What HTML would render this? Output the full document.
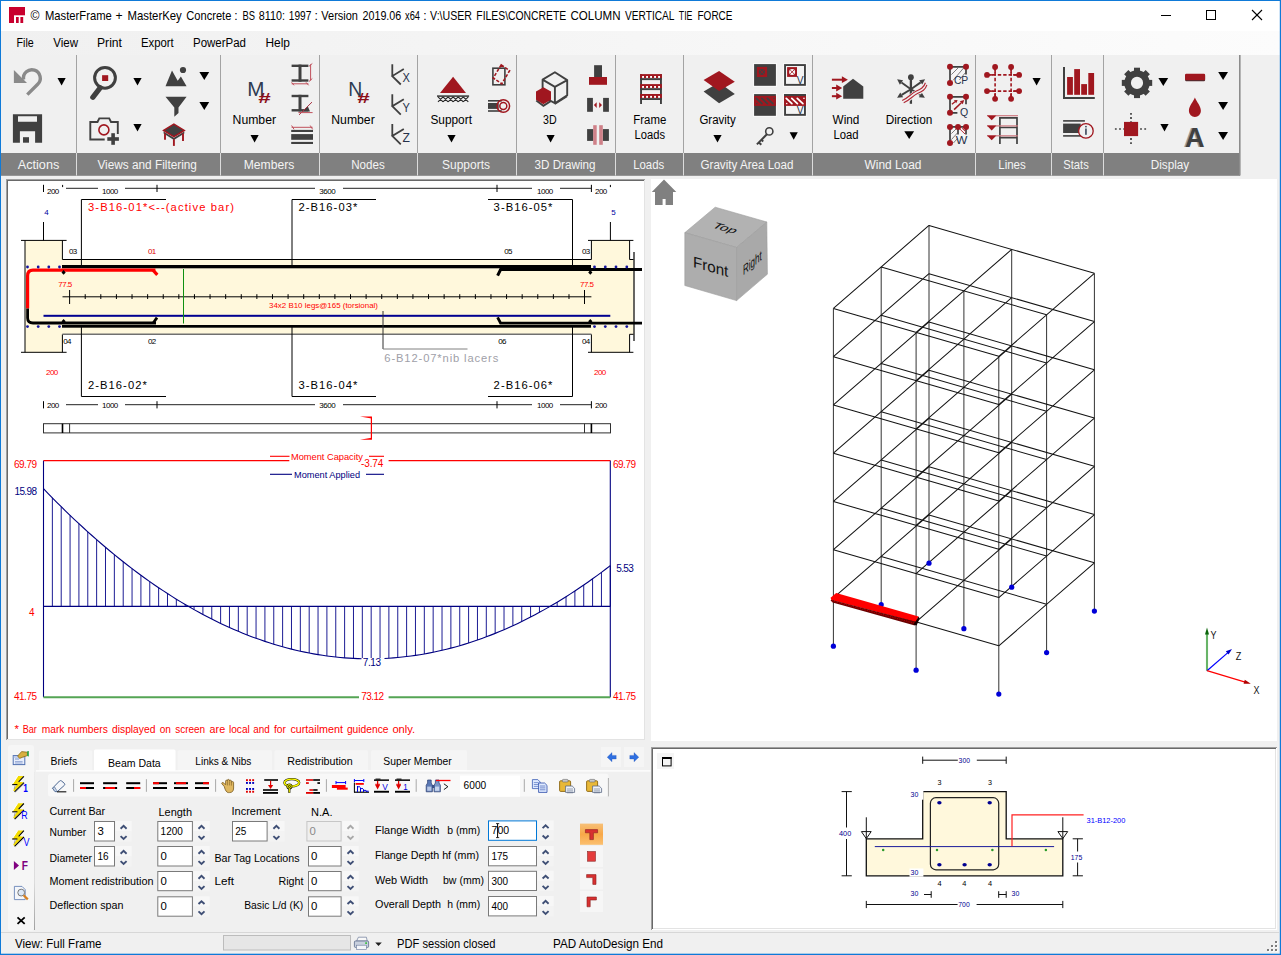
<!DOCTYPE html>
<html><head><meta charset="utf-8"><title>MasterFrame</title>
<style>
html,body{margin:0;padding:0;background:#f0f0f0;overflow:hidden;}
body{width:1281px;height:955px;font-family:"Liberation Sans",sans-serif;}
svg{display:block;font-family:"Liberation Sans",sans-serif;}
</style></head><body>
<svg width="1281" height="955" viewBox="0 0 1281 955">
<rect x="0" y="0" width="1281" height="955" fill="#f0f0f0" />
<rect x="0" y="0" width="1281" height="31" fill="#ffffff" />
<defs><linearGradient id="mg" x1="0" y1="0" x2="1" y2="0"><stop offset="0" stop-color="#f0f0f0"/><stop offset="1" stop-color="#fcfcfc"/></linearGradient></defs>
<rect x="0" y="31" width="1281" height="24" fill="url(#mg)" />
<rect x="9" y="7" width="16" height="16" fill="#c8002e" />
<rect x="14" y="15.3" width="11" height="7.7" fill="#ffffff" />
<rect x="16" y="17" width="2.7" height="6" fill="#c8002e" />
<rect x="20.4" y="17" width="2.8" height="6" fill="#c8002e" />
<text x="30.5" y="19.8" font-size="12.2" fill="#000" text-anchor="start" >©</text>
<text x="45" y="19.8" font-size="12.2" fill="#000" text-anchor="start" textLength="66.8" lengthAdjust="spacingAndGlyphs" >MasterFrame</text>
<text x="115.6" y="19.8" font-size="12.2" fill="#000" text-anchor="start" >+</text>
<text x="127.5" y="19.8" font-size="12.2" fill="#000" text-anchor="start" textLength="54.3" lengthAdjust="spacingAndGlyphs" >MasterKey</text>
<text x="186.3" y="19.8" font-size="12.2" fill="#000" text-anchor="start" textLength="45.0" lengthAdjust="spacingAndGlyphs" >Concrete</text>
<text x="234.2" y="19.8" font-size="12.2" fill="#000" text-anchor="start" >:</text>
<text x="242.5" y="19.8" font-size="12.2" fill="#000" text-anchor="start" textLength="12.5" lengthAdjust="spacingAndGlyphs" >BS</text>
<text x="258.8" y="19.8" font-size="12.2" fill="#000" text-anchor="start" textLength="26.2" lengthAdjust="spacingAndGlyphs" >8110:</text>
<text x="288.8" y="19.8" font-size="12.2" fill="#000" text-anchor="start" textLength="22.5" lengthAdjust="spacingAndGlyphs" >1997</text>
<text x="314.6" y="19.8" font-size="12.2" fill="#000" text-anchor="start" >:</text>
<text x="321.3" y="19.8" font-size="12.2" fill="#000" text-anchor="start" textLength="36.7" lengthAdjust="spacingAndGlyphs" >Version</text>
<text x="362.5" y="19.8" font-size="12.2" fill="#000" text-anchor="start" textLength="38.8" lengthAdjust="spacingAndGlyphs" >2019.06</text>
<text x="405" y="19.8" font-size="12.2" fill="#000" text-anchor="start" textLength="15" lengthAdjust="spacingAndGlyphs" >x64</text>
<text x="423.2" y="19.8" font-size="12.2" fill="#000" text-anchor="start" >:</text>
<text x="430" y="19.8" font-size="12.2" fill="#000" text-anchor="start" textLength="42" lengthAdjust="spacingAndGlyphs" >V:\USER</text>
<text x="476.3" y="19.8" font-size="12.2" fill="#000" text-anchor="start" textLength="90.0" lengthAdjust="spacingAndGlyphs" >FILES\CONCRETE</text>
<text x="570.5" y="19.8" font-size="12.2" fill="#000" text-anchor="start" textLength="50.0" lengthAdjust="spacingAndGlyphs" >COLUMN</text>
<text x="625" y="19.8" font-size="12.2" fill="#000" text-anchor="start" textLength="49.5" lengthAdjust="spacingAndGlyphs" >VERTICAL</text>
<text x="678.8" y="19.8" font-size="12.2" fill="#000" text-anchor="start" textLength="13.7" lengthAdjust="spacingAndGlyphs" >TIE</text>
<text x="697.5" y="19.8" font-size="12.2" fill="#000" text-anchor="start" textLength="35.0" lengthAdjust="spacingAndGlyphs" >FORCE</text>
<line x1="1161" y1="15.5" x2="1171" y2="15.5" stroke="#000" stroke-width="1" />
<rect x="1206.5" y="10.5" width="9" height="9" fill="none" stroke="#000" stroke-width="1" />
<line x1="1252" y1="10" x2="1262" y2="20" stroke="#000" stroke-width="1.1" />
<line x1="1262" y1="10" x2="1252" y2="20" stroke="#000" stroke-width="1.1" />
<text x="16.5" y="46.8" font-size="12.3" fill="#000" text-anchor="start" textLength="17.2" lengthAdjust="spacingAndGlyphs" >File</text>
<text x="53.2" y="46.8" font-size="12.3" fill="#000" text-anchor="start" textLength="24.8" lengthAdjust="spacingAndGlyphs" >View</text>
<text x="97" y="46.8" font-size="12.3" fill="#000" text-anchor="start" textLength="25" lengthAdjust="spacingAndGlyphs" >Print</text>
<text x="141" y="46.8" font-size="12.3" fill="#000" text-anchor="start" textLength="32.7" lengthAdjust="spacingAndGlyphs" >Export</text>
<text x="193" y="46.8" font-size="12.3" fill="#000" text-anchor="start" textLength="53" lengthAdjust="spacingAndGlyphs" >PowerPad</text>
<text x="265.5" y="46.8" font-size="12.3" fill="#000" text-anchor="start" textLength="24.5" lengthAdjust="spacingAndGlyphs" >Help</text>
<rect x="6" y="179" width="639" height="561" fill="#ffffff" />
<line x1="6" y1="179.5" x2="645" y2="179.5" stroke="#a0a0a0" stroke-width="1" />
<line x1="6.5" y1="179" x2="6.5" y2="740" stroke="#a0a0a0" stroke-width="1" />
<line x1="7" y1="180.5" x2="644" y2="180.5" stroke="#696969" stroke-width="1" />
<line x1="7.5" y1="180" x2="7.5" y2="739" stroke="#696969" stroke-width="1" />
<line x1="644.5" y1="180" x2="644.5" y2="740" stroke="#e3e3e3" stroke-width="1" />
<line x1="7" y1="739.5" x2="645" y2="739.5" stroke="#e3e3e3" stroke-width="1" />
<rect x="651" y="179" width="626" height="562" fill="#ffffff" />
<rect x="651" y="747" width="626" height="183" fill="#ffffff" />
<line x1="651" y1="747.5" x2="1277" y2="747.5" stroke="#a0a0a0" stroke-width="1" />
<line x1="651.5" y1="747" x2="651.5" y2="930" stroke="#a0a0a0" stroke-width="1" />
<line x1="652" y1="748.5" x2="1276" y2="748.5" stroke="#696969" stroke-width="1" />
<line x1="652.5" y1="748" x2="652.5" y2="929" stroke="#696969" stroke-width="1" />
<line x1="1275.5" y1="749" x2="1275.5" y2="929" stroke="#e3e3e3" stroke-width="1" />
<line x1="653" y1="928.5" x2="1276" y2="928.5" stroke="#e3e3e3" stroke-width="1" />
<line x1="0" y1="932.5" x2="1279" y2="932.5" stroke="#d7d7d7" stroke-width="1" />
<text x="15" y="947.7" font-size="12.2" fill="#000" text-anchor="start" textLength="86.5" lengthAdjust="spacingAndGlyphs" >View: Full Frame</text>
<rect x="223.5" y="935.5" width="127" height="14.5" fill="#e6e6e6" stroke="#bcbcbc" stroke-width="1" />
<text x="397" y="947.7" font-size="12.2" fill="#000" text-anchor="start" textLength="98.5" lengthAdjust="spacingAndGlyphs" >PDF session closed</text>
<text x="553" y="947.7" font-size="12.2" fill="#000" text-anchor="start" textLength="110" lengthAdjust="spacingAndGlyphs" >PAD AutoDesign End</text>
<rect x="1275.8" y="941.8" width="2" height="2" fill="#ffffff" />
<rect x="1275" y="941" width="2" height="2" fill="#7c7c7c" />
<rect x="1271.8" y="945.8" width="2" height="2" fill="#ffffff" />
<rect x="1271" y="945" width="2" height="2" fill="#7c7c7c" />
<rect x="1275.8" y="945.8" width="2" height="2" fill="#ffffff" />
<rect x="1275" y="945" width="2" height="2" fill="#7c7c7c" />
<rect x="1267.8" y="949.8" width="2" height="2" fill="#ffffff" />
<rect x="1267" y="949" width="2" height="2" fill="#7c7c7c" />
<rect x="1271.8" y="949.8" width="2" height="2" fill="#ffffff" />
<rect x="1271" y="949" width="2" height="2" fill="#7c7c7c" />
<rect x="1275.8" y="949.8" width="2" height="2" fill="#ffffff" />
<rect x="1275" y="949" width="2" height="2" fill="#7c7c7c" />
<rect x="1" y="55" width="1239" height="98" fill="#f0f0f0" />
<rect x="1" y="153" width="1239" height="22.8" fill="#808080" />
<line x1="76.5" y1="55" x2="76.5" y2="153" stroke="#a3a3a3" stroke-width="1" />
<line x1="76.5" y1="153" x2="76.5" y2="175.5" stroke="#dcdcdc" stroke-width="1" />
<line x1="220.5" y1="55" x2="220.5" y2="153" stroke="#a3a3a3" stroke-width="1" />
<line x1="220.5" y1="153" x2="220.5" y2="175.5" stroke="#dcdcdc" stroke-width="1" />
<line x1="319.5" y1="55" x2="319.5" y2="153" stroke="#a3a3a3" stroke-width="1" />
<line x1="319.5" y1="153" x2="319.5" y2="175.5" stroke="#dcdcdc" stroke-width="1" />
<line x1="417.5" y1="55" x2="417.5" y2="153" stroke="#a3a3a3" stroke-width="1" />
<line x1="417.5" y1="153" x2="417.5" y2="175.5" stroke="#dcdcdc" stroke-width="1" />
<line x1="516.5" y1="55" x2="516.5" y2="153" stroke="#a3a3a3" stroke-width="1" />
<line x1="516.5" y1="153" x2="516.5" y2="175.5" stroke="#dcdcdc" stroke-width="1" />
<line x1="615.5" y1="55" x2="615.5" y2="153" stroke="#a3a3a3" stroke-width="1" />
<line x1="615.5" y1="153" x2="615.5" y2="175.5" stroke="#dcdcdc" stroke-width="1" />
<line x1="683.5" y1="55" x2="683.5" y2="153" stroke="#a3a3a3" stroke-width="1" />
<line x1="683.5" y1="153" x2="683.5" y2="175.5" stroke="#dcdcdc" stroke-width="1" />
<line x1="812.5" y1="55" x2="812.5" y2="153" stroke="#a3a3a3" stroke-width="1" />
<line x1="812.5" y1="153" x2="812.5" y2="175.5" stroke="#dcdcdc" stroke-width="1" />
<line x1="975.5" y1="55" x2="975.5" y2="153" stroke="#a3a3a3" stroke-width="1" />
<line x1="975.5" y1="153" x2="975.5" y2="175.5" stroke="#dcdcdc" stroke-width="1" />
<line x1="1051.5" y1="55" x2="1051.5" y2="153" stroke="#a3a3a3" stroke-width="1" />
<line x1="1051.5" y1="153" x2="1051.5" y2="175.5" stroke="#dcdcdc" stroke-width="1" />
<line x1="1103.5" y1="55" x2="1103.5" y2="153" stroke="#a3a3a3" stroke-width="1" />
<line x1="1103.5" y1="153" x2="1103.5" y2="175.5" stroke="#dcdcdc" stroke-width="1" />
<line x1="1239.8" y1="55" x2="1239.8" y2="175.5" stroke="#8c8c8c" stroke-width="1.6" />
<text x="17.75" y="168.6" font-size="12" fill="#f4f4f4" text-anchor="start" textLength="41.5" lengthAdjust="spacingAndGlyphs" >Actions</text>
<text x="97.44999999999999" y="168.6" font-size="12" fill="#f4f4f4" text-anchor="start" textLength="99.5" lengthAdjust="spacingAndGlyphs" >Views and Filtering</text>
<text x="243.75" y="168.6" font-size="12" fill="#f4f4f4" text-anchor="start" textLength="50.5" lengthAdjust="spacingAndGlyphs" >Members</text>
<text x="351.25" y="168.6" font-size="12" fill="#f4f4f4" text-anchor="start" textLength="33.5" lengthAdjust="spacingAndGlyphs" >Nodes</text>
<text x="442.0" y="168.6" font-size="12" fill="#f4f4f4" text-anchor="start" textLength="48" lengthAdjust="spacingAndGlyphs" >Supports</text>
<text x="534.5" y="168.6" font-size="12" fill="#f4f4f4" text-anchor="start" textLength="61" lengthAdjust="spacingAndGlyphs" >3D Drawing</text>
<text x="633.2" y="168.6" font-size="12" fill="#f4f4f4" text-anchor="start" textLength="31" lengthAdjust="spacingAndGlyphs" >Loads</text>
<text x="700.5" y="168.6" font-size="12" fill="#f4f4f4" text-anchor="start" textLength="93" lengthAdjust="spacingAndGlyphs" >Gravity Area Load</text>
<text x="864.5" y="168.6" font-size="12" fill="#f4f4f4" text-anchor="start" textLength="57" lengthAdjust="spacingAndGlyphs" >Wind Load</text>
<text x="998.25" y="168.6" font-size="12" fill="#f4f4f4" text-anchor="start" textLength="27.5" lengthAdjust="spacingAndGlyphs" >Lines</text>
<text x="1063.25" y="168.6" font-size="12" fill="#f4f4f4" text-anchor="start" textLength="25.5" lengthAdjust="spacingAndGlyphs" >Stats</text>
<text x="1150.75" y="168.6" font-size="12" fill="#f4f4f4" text-anchor="start" textLength="38.5" lengthAdjust="spacingAndGlyphs" >Display</text>
<path d="M13.9,70 L13.9,83.1 L27,83.1 Z" fill="#8a8a8a" />
<path d="M23.6,79.6 A8.4 8.4 0 1 1 37.7,84.2 L27.3,94.6" fill="none" stroke="#8a8a8a" stroke-width="3.4" stroke-linejoin="miter"/>
<path d="M57.5,78 L65.7,78 L61.6,85.5 Z" fill="#000" />
<path d="M12.9,114.2 H42.1 V142.7 H35.1 V131.2 H19.9 V142.7 H12.9 Z M18,116.3 V121.7 H37 V116.3 Z" fill="#404040" fill-rule="evenodd"/>
<rect x="23" y="137.2" width="6" height="5.5" fill="#404040" />
<circle cx="105" cy="77.8" r="10.4" fill="none" stroke="#404040" stroke-width="3"/>
<rect x="102.1" y="75.2" width="6.1" height="5.8" fill="#a0171f" />
<line x1="100.3" y1="87.7" x2="92.8" y2="97.3" stroke="#404040" stroke-width="5.2" stroke-linecap="round"/>
<path d="M133.4,78 L141.6,78 L137.5,85.5 Z" fill="#000" />
<path d="M104.7,139.5 H90.3 V122 H97.5 L99.3,118.4 H109.2 L111,122 H117.8 V134" fill="none" stroke="#404040" stroke-width="1.9" />
<circle cx="103.9" cy="129.9" r="5" fill="none" stroke="#a0171f" stroke-width="1.6"/>
<rect x="107.3" y="137.2" width="11.6" height="3.6" fill="#404040" />
<rect x="111.3" y="133.2" width="3.6" height="11.6" fill="#404040" />
<path d="M133.4,124.1 L141.6,124.1 L137.5,131.6 Z" fill="#000" />
<path d="M165.5,86.2 L172,70.5 L177.7,80.7 L180.9,76.5 L186.6,86.2 Z" fill="#404040" />
<circle cx="183" cy="70" r="3.1" fill="#404040"/>
<path d="M199.4,72.1 L209.20000000000002,72.1 L204.3,79.89999999999999 Z" fill="#000" />
<path d="M165.5,96.7 H186.6 L178.5,107.4 V113.1 L174.3,116.8 V107.4 Z" fill="#404040" />
<path d="M199.4,102.1 L209.20000000000002,102.1 L204.3,109.89999999999999 Z" fill="#000" />
<path d="M163.6,131.4 L173.9,137.7 L184.3,131.4 V133.6 L173.9,139.9 L163.6,133.6 Z" fill="#404040" />
<path d="M163.6,130.4 L173.9,124.1 L184.3,130.4 L173.9,136.7 Z" fill="#404040" stroke="#a0171f" stroke-width="1.5" />
<line x1="165" y1="133.5" x2="165" y2="139.8" stroke="#a0171f" stroke-width="1.9" />
<line x1="173.9" y1="139.2" x2="173.9" y2="145.9" stroke="#a0171f" stroke-width="1.9" />
<line x1="183" y1="133.5" x2="183" y2="140.9" stroke="#a0171f" stroke-width="1.9" />
<text x="247.2" y="95.8" font-size="20.4" fill="#2e3b50" text-anchor="start" textLength="17.2" lengthAdjust="spacingAndGlyphs" >M</text>
<text x="257.9" y="102.8" font-size="14.6" fill="#8c0f1a" text-anchor="start" textLength="12.4" lengthAdjust="spacingAndGlyphs" font-weight="bold" font-style="italic">#</text>
<text x="232.55" y="123.6" font-size="12" fill="#000" text-anchor="start" textLength="43.5" lengthAdjust="spacingAndGlyphs" >Number</text>
<path d="M250.5,135.1 L258.7,135.1 L254.6,142.6 Z" fill="#000" />
<rect x="291.6" y="64.6" width="16.799999999999955" height="2.4" fill="#404040" />
<rect x="291.6" y="79.3" width="16.799999999999955" height="2.4" fill="#404040" />
<rect x="298.5" y="64.6" width="3" height="17.10000000000001" fill="#404040" />
<line x1="310.6" y1="64.3" x2="310.6" y2="80.5" stroke="#c0505c" stroke-width="1" />
<line x1="309" y1="66.3" x2="312.3" y2="63.5" stroke="#c0505c" stroke-width="1" />
<line x1="309" y1="81.5" x2="312.3" y2="78.5" stroke="#c0505c" stroke-width="1" />
<line x1="291.6" y1="83.8" x2="308.4" y2="83.8" stroke="#c0505c" stroke-width="1" />
<line x1="291.6" y1="82.3" x2="294" y2="85.3" stroke="#c0505c" stroke-width="1" />
<line x1="306" y1="82.3" x2="308.6" y2="85.3" stroke="#c0505c" stroke-width="1" />
<rect x="291.6" y="94.8" width="16.799999999999955" height="2.4" fill="#404040" />
<rect x="291.6" y="109.1" width="16.799999999999955" height="2.4" fill="#404040" />
<rect x="298.5" y="94.8" width="3" height="16.700000000000003" fill="#404040" />
<path d="M302.1,111.5 L310,111.5 L307.9,106.6 Z" fill="#404040" />
<line x1="299" y1="114.9" x2="312" y2="102.1" stroke="#a83040" stroke-width="1" />
<line x1="298.4" y1="112.6" x2="312.6" y2="112.6" stroke="#c0505c" stroke-width="1" />
<line x1="291.6" y1="127.3" x2="312.6" y2="127.3" stroke="#c0505c" stroke-width="1" />
<line x1="291.6" y1="125.5" x2="294" y2="129.3" stroke="#c0505c" stroke-width="1" />
<line x1="310.2" y1="125.5" x2="312.6" y2="129.3" stroke="#c0505c" stroke-width="1" />
<rect x="291.2" y="129.9" width="21.8" height="2.1" fill="#404040" />
<rect x="291.2" y="134.1" width="21.8" height="5.7" fill="#404040" />
<rect x="291.2" y="141.9" width="21.8" height="2.1" fill="#404040" />
<text x="348.2" y="95.8" font-size="20.4" fill="#2e3b50" text-anchor="start" textLength="14" lengthAdjust="spacingAndGlyphs" >N</text>
<text x="357" y="102.8" font-size="14.6" fill="#8c0f1a" text-anchor="start" textLength="12.4" lengthAdjust="spacingAndGlyphs" font-weight="bold" font-style="italic">#</text>
<text x="331.25" y="123.6" font-size="12" fill="#000" text-anchor="start" textLength="43.5" lengthAdjust="spacingAndGlyphs" >Number</text>
<path d="M392.3,64.2 V76.2 M403.8,69.10000000000001 L392.3,76.10000000000001 L400.8,84.5" fill="none" stroke="#404040" stroke-width="1.8" stroke-linejoin="miter"/>
<text x="402.5" y="81.7" font-size="12" fill="#26314a" text-anchor="start" textLength="7.4" lengthAdjust="spacingAndGlyphs" >X</text>
<path d="M392.3,94.3 V106.3 M403.8,99.2 L392.3,106.2 L400.8,114.6" fill="none" stroke="#404040" stroke-width="1.8" stroke-linejoin="miter"/>
<text x="402.5" y="111.8" font-size="12" fill="#26314a" text-anchor="start" textLength="7.4" lengthAdjust="spacingAndGlyphs" >Y</text>
<path d="M392.3,124.1 V136.1 M403.8,129.0 L392.3,136.0 L400.8,144.4" fill="none" stroke="#404040" stroke-width="1.8" stroke-linejoin="miter"/>
<text x="402.5" y="141.6" font-size="12" fill="#26314a" text-anchor="start" textLength="7.4" lengthAdjust="spacingAndGlyphs" >Z</text>
<path d="M453.1,76.8 L466,92.9 L440,92.9 Z" fill="#a0171f" />
<rect x="437" y="95.3" width="32.1" height="1.6" fill="#404040" />
<path d="M438.0,96.9 L443.05,101.9 M443.05,96.9 L438.0,101.9 M443.05,96.9 L448.1,101.9 M448.1,96.9 L443.05,101.9 M448.1,96.9 L453.15000000000003,101.9 M453.15000000000003,96.9 L448.1,101.9 M453.15,96.9 L458.2,101.9 M458.2,96.9 L453.15,101.9 M458.2,96.9 L463.25,101.9 M463.25,96.9 L458.2,101.9 M463.25,96.9 L468.3,101.9 M468.3,96.9 L463.25,101.9 " fill="none" stroke="#2a2a2a" stroke-width="1.15" />
<text x="430.45" y="123.6" font-size="12" fill="#000" text-anchor="start" textLength="41.5" lengthAdjust="spacingAndGlyphs" >Support</text>
<path d="M447.4,135.1 L455.6,135.1 L451.5,142.6 Z" fill="#000" />
<rect x="492.9" y="68.2" width="12" height="16.6" fill="none" stroke="#404040" stroke-width="1.6" />
<path d="M501.2,64.9 L509.6,70.7 L501.8,83.8 L493.2,78 Z" fill="none" stroke="#a0171f" stroke-width="1.6" stroke-dasharray="3.2 1.6"/>
<rect x="488" y="100" width="13.8" height="1.6" fill="#404040" />
<rect x="488" y="110.2" width="13.8" height="1.6" fill="#404040" />
<rect x="488" y="103" width="10.7" height="5.9" fill="#404040" />
<circle cx="503.3" cy="106" r="6.3" fill="none" stroke="#a0171f" stroke-width="1.5"/>
<circle cx="503.3" cy="106" r="3.5" fill="none" stroke="#a0171f" stroke-width="1.5"/>
<path d="M554.9,72.3 L567.2,80.1 L554.9,86.9 L542.6,79.6 Z M567.2,80.1 V95.3 L554.9,103.2 V86.9 M542.6,79.6 V90 M548,99.5 L554.9,103.2" fill="none" stroke="#404040" stroke-width="1.9" stroke-linejoin="round"/>
<path d="M554.9,104.3 L567.2,96.4" fill="none" stroke="#404040" stroke-width="1.2" />
<path d="M536.3,100.5 L543.4,105.8 L551,100.9" fill="none" stroke="#404040" stroke-width="2" />
<path d="M543.4,87.3 L551,91.4 L551,99.8 L543.4,104.2 L536,99.8 L536,91.4 Z" fill="#a0171f" />
<text x="543.1" y="123.6" font-size="12" fill="#000" text-anchor="start" textLength="13.6" lengthAdjust="spacingAndGlyphs" >3D</text>
<path d="M546.5,135.1 L554.7,135.1 L550.6,142.6 Z" fill="#000" />
<rect x="594.1" y="65.2" width="7.9" height="11.8" fill="#404040" />
<rect x="589" y="77" width="18" height="7.8" fill="#a0171f" />
<rect x="587.1" y="97.9" width="5.8" height="13.9" fill="#404040" />
<rect x="603.1" y="97.9" width="5.8" height="13.9" fill="#404040" />
<path d="M593.9,105.1 L596.7,102.3 V107.9 Z M602,105.1 L599.2,102.3 V107.9 Z" fill="#a0171f" />
<rect x="587.1" y="129.1" width="6.3" height="11.8" fill="#404040" />
<rect x="602.8" y="129.1" width="6.1" height="11.8" fill="#404040" />
<rect x="593.2" y="125.2" width="3.5" height="19.6" fill="#cf8088" />
<rect x="599.2" y="125.2" width="3.6" height="19.6" fill="#cf8088" />
<rect x="640.1" y="74.1" width="1.9" height="29.9" fill="#404040" />
<rect x="660" y="74.1" width="1.9" height="29.9" fill="#404040" />
<rect x="640.1" y="74.1" width="21.8" height="4.2" fill="#a0171f" />
<rect x="640.1" y="78.19999999999999" width="21.8" height="1.9" fill="#404040" />
<rect x="642.1" y="76.0" width="1.9" height="1.9" fill="#fff" />
<rect x="646.1" y="76.0" width="1.9" height="1.9" fill="#fff" />
<rect x="650.1" y="76.0" width="1.9" height="1.9" fill="#fff" />
<rect x="654.1" y="76.0" width="1.9" height="1.9" fill="#fff" />
<rect x="658.1" y="76.0" width="1.9" height="1.9" fill="#fff" />
<rect x="640.1" y="84.1" width="21.8" height="4.2" fill="#a0171f" />
<rect x="640.1" y="88.19999999999999" width="21.8" height="1.9" fill="#404040" />
<rect x="642.1" y="86.0" width="1.9" height="1.9" fill="#fff" />
<rect x="646.1" y="86.0" width="1.9" height="1.9" fill="#fff" />
<rect x="650.1" y="86.0" width="1.9" height="1.9" fill="#fff" />
<rect x="654.1" y="86.0" width="1.9" height="1.9" fill="#fff" />
<rect x="658.1" y="86.0" width="1.9" height="1.9" fill="#fff" />
<rect x="640.1" y="94" width="21.8" height="4.2" fill="#a0171f" />
<rect x="640.1" y="98.1" width="21.8" height="1.9" fill="#404040" />
<rect x="642.1" y="95.9" width="1.9" height="1.9" fill="#fff" />
<rect x="646.1" y="95.9" width="1.9" height="1.9" fill="#fff" />
<rect x="650.1" y="95.9" width="1.9" height="1.9" fill="#fff" />
<rect x="654.1" y="95.9" width="1.9" height="1.9" fill="#fff" />
<rect x="658.1" y="95.9" width="1.9" height="1.9" fill="#fff" />
<text x="633.3" y="123.6" font-size="12" fill="#000" text-anchor="start" textLength="33" lengthAdjust="spacingAndGlyphs" >Frame</text>
<text x="634.5999999999999" y="138.8" font-size="12" fill="#000" text-anchor="start" textLength="30.4" lengthAdjust="spacingAndGlyphs" >Loads</text>
<path d="M703.6,91.6 L719.1,82.4 L734.8,94 L719.1,103.2 Z" fill="#404040" />
<path d="M719.1,70.9 L734.8,81.7 L719.1,91.1 L703.6,80.1 Z" fill="#a0171f" />
<text x="699.45" y="123.6" font-size="12" fill="#000" text-anchor="start" textLength="36.3" lengthAdjust="spacingAndGlyphs" >Gravity</text>
<path d="M713.4,135.1 L721.6,135.1 L717.5,142.6 Z" fill="#000" />
<rect x="753.4" y="63.39999999999999" width="23.2" height="23.1" fill="none" stroke="#fafafa" stroke-width="0.8" />
<rect x="783.4" y="63.39999999999999" width="23.2" height="23.1" fill="none" stroke="#fafafa" stroke-width="0.8" />
<rect x="753.4" y="93.39999999999999" width="23.2" height="23.1" fill="none" stroke="#fafafa" stroke-width="0.8" />
<rect x="783.4" y="93.39999999999999" width="23.2" height="23.1" fill="none" stroke="#fafafa" stroke-width="0.8" />
<rect x="754.1" y="64.1" width="21.8" height="21.7" fill="#404040" />
<rect x="756.9" y="66.9" width="10.2" height="10.1" fill="#a0171f" />
<circle cx="761.9" cy="71.9" r="3" fill="#404040"/>
<line x1="760.0" y1="70.0" x2="763.8" y2="73.80000000000001" stroke="#a0171f" stroke-width="0.8" />
<line x1="763.8" y1="70.0" x2="760.0" y2="73.80000000000001" stroke="#a0171f" stroke-width="0.8" />
<rect x="785.05" y="65.05" width="19.9" height="19.8" fill="#f3f3f3" stroke="#404040" stroke-width="1.9" />
<rect x="787.1" y="67.1" width="9.9" height="9.8" fill="#a0171f" />
<circle cx="792.1" cy="71.9" r="3" fill="#f6f6f6"/>
<line x1="790.2" y1="70.0" x2="794.0" y2="73.80000000000001" stroke="#a0171f" stroke-width="0.8" />
<line x1="794.0" y1="70.0" x2="790.2" y2="73.80000000000001" stroke="#a0171f" stroke-width="0.8" />
<text x="796.7" y="83.9" font-size="11" fill="#26314a" text-anchor="start" textLength="6.8" lengthAdjust="spacingAndGlyphs" >V</text>
<rect x="754.1" y="94.1" width="21.8" height="21.7" fill="#404040" />
<rect x="754.1" y="95.9" width="21.8" height="10" fill="#a0171f" />
<path d="M756.3,98.4 L761.9,103.6 M761.8,98.4 L767.4,103.6 M767.3,98.4 L772.9,103.6 " fill="none" stroke="#404040" stroke-width="1.8" stroke-linecap="round"/>
<rect x="773.3000000000001" y="97.7" width="1.3" height="1.3" fill="#404040" />
<rect x="756.1" y="102.9" width="1.3" height="1.3" fill="#404040" />
<rect x="785.05" y="95.05" width="19.9" height="19.8" fill="#f3f3f3" stroke="#404040" stroke-width="1.9" />
<rect x="784.1" y="95.9" width="21.8" height="10" fill="#a0171f" />
<rect x="784.1" y="94.1" width="21.8" height="1.9" fill="#404040" />
<path d="M786.3,98.4 L791.9,103.6 M791.8,98.4 L797.4,103.6 M797.3,98.4 L802.9,103.6 " fill="none" stroke="#ffffff" stroke-width="1.8" stroke-linecap="round"/>
<rect x="803.3000000000001" y="97.7" width="1.3" height="1.3" fill="#ffffff" />
<rect x="786.1" y="102.9" width="1.3" height="1.3" fill="#ffffff" />
<text x="796.7" y="113.6" font-size="11" fill="#26314a" text-anchor="start" textLength="6.8" lengthAdjust="spacingAndGlyphs" >V</text>
<circle cx="769.3" cy="131.4" r="3.6" fill="none" stroke="#404040" stroke-width="1.6"/>
<path d="M766.9,134.2 L756.9,144.4 M758.7,142.2 L761.3,144.8 M761.3,139.6 L763.2,141.5" fill="none" stroke="#404040" stroke-width="2" />
<path d="M789.6,132.3 L797.8000000000001,132.3 L793.7,139.8 Z" fill="#000" />
<path d="M843.2,98.8 V86.4 L853,78.7 L863.3,86.4 V98.8 Z" fill="#404040" />
<rect x="831.9" y="78.7" width="12.0" height="2" fill="#a0171f" />
<path d="M847.9,79.7 L841.9,76.3 V83.10000000000001 Z" fill="#a0171f" />
<rect x="831.9" y="87" width="6.300000000000068" height="2" fill="#a0171f" />
<path d="M842.2,88 L836.2,84.6 V91.4 Z" fill="#a0171f" />
<rect x="831.9" y="95.2" width="6.300000000000068" height="2" fill="#a0171f" />
<path d="M842.2,96.2 L836.2,92.8 V99.60000000000001 Z" fill="#a0171f" />
<text x="832.6" y="124.1" font-size="12" fill="#000" text-anchor="start" textLength="26.8" lengthAdjust="spacingAndGlyphs" >Wind</text>
<text x="833.45" y="138.9" font-size="12" fill="#000" text-anchor="start" textLength="25.1" lengthAdjust="spacingAndGlyphs" >Load</text>
<line x1="910.9" y1="89.2" x2="901.4877065534004" y2="82.44770252743935" stroke="#404040" stroke-width="1.9" />
<path d="M897.10,79.30 L903.06,80.25 L899.91,84.64 Z" fill="#404040" />
<line x1="910.9" y1="89.2" x2="920.670293386224" y2="82.38831658284387" stroke="#404040" stroke-width="1.9" />
<path d="M925.10,79.30 L922.21,84.60 L919.13,80.17 Z" fill="#404040" />
<line x1="910.9" y1="89.2" x2="901.6978105871145" y2="94.86801521808161" stroke="#404040" stroke-width="1.9" />
<path d="M897.10,97.70 L900.28,92.57 L903.11,97.17 Z" fill="#404040" />
<line x1="910.9" y1="89.2" x2="920.2841474178026" y2="94.89751807509448" stroke="#404040" stroke-width="1.9" />
<path d="M924.90,97.70 L918.88,97.21 L921.69,92.59 Z" fill="#404040" />
<line x1="910.9" y1="78" x2="910.9" y2="103.8" stroke="#404040" stroke-width="2.3" />
<circle cx="910.9" cy="77.2" r="2.9" fill="#404040"/>
<path d="M902.8,101.4 C908.5,99.2 911.5,94.6 916.5,92.2 C921.5,90 924.4,88.6 926,83.6" fill="none" stroke="#f0f0f0" stroke-width="5.4" transform="translate(0.3,0.4)"/>
<path d="M902.8,101.4 C908.5,99.2 911.5,94.6 916.5,92.2 C921.5,90 924.4,88.6 926,83.6" fill="none" stroke="#b02834" stroke-width="1.15" transform="translate(-0.6,-0.9)"/>
<path d="M902.8,101.4 C908.5,99.2 911.5,94.6 916.5,92.2 C921.5,90 924.4,88.6 926,83.6" fill="none" stroke="#b02834" stroke-width="1.15" transform="translate(0.9,1.3)"/>
<text x="885.65" y="124.1" font-size="12" fill="#000" text-anchor="start" textLength="46.7" lengthAdjust="spacingAndGlyphs" >Direction</text>
<path d="M904.3000000000001,131.2 L914.1,131.2 L909.2,138.89999999999998 Z" fill="#000" />
<rect x="950.8" y="67.6" width="14.4" height="14.4" fill="#f6f6f6" />
<path d="M951.4,74.6 L958,68 M953,80.4 L963.6,68 M959.4,80 L965.4,72.6" fill="none" stroke="#6e6e6e" stroke-width="0.9" />
<path d="M950,82.9 V66.8 H966 V74.4" fill="none" stroke="#404040" stroke-width="1.7" />
<circle cx="950" cy="66.8" r="3" fill="#a0171f"/>
<circle cx="966" cy="66.8" r="3" fill="#a0171f"/>
<circle cx="950" cy="82.9" r="3" fill="#a0171f"/>
<text x="953.9" y="84.4" font-size="11.2" fill="#26314a" text-anchor="start" textLength="14.4" lengthAdjust="spacingAndGlyphs" >CP</text>
<path d="M950,96.8 H966 V104.3 M950,96.8 V112.8 H957.4" fill="none" stroke="#404040" stroke-width="1.7" />
<line x1="954.1" y1="109.6" x2="961.3007190645208" y2="102.75575217629714" stroke="#a0171f" stroke-width="1.5" />
<path d="M964.20,100.00 L962.82,104.35 L959.79,101.16 Z" fill="#a0171f" />
<line x1="951.9" y1="104.2" x2="955.0453881733353" y2="101.82716330783478" stroke="#a0171f" stroke-width="1.3" />
<path d="M957.60,99.90 L956.19,103.34 L953.90,100.31 Z" fill="#a0171f" />
<circle cx="950" cy="96.8" r="3" fill="#a0171f"/>
<circle cx="966" cy="96.8" r="3" fill="#a0171f"/>
<circle cx="950" cy="112.8" r="3" fill="#a0171f"/>
<text x="960" y="115.5" font-size="11.2" fill="#26314a" text-anchor="start" textLength="8.2" lengthAdjust="spacingAndGlyphs" >Q</text>
<rect x="950.8" y="127.6" width="14.4" height="14.4" fill="#f6f6f6" />
<path d="M951.4,133.6 L957,128 M951.4,139.6 L957.4,133 M953.4,143 L957.6,138.4" fill="none" stroke="#6e6e6e" stroke-width="0.9" />
<path d="M950,142.9 V126.9 H966 V134.5 M958,126.9 V134.5" fill="none" stroke="#404040" stroke-width="1.7" />
<path d="M959.4,128.6 L965,134 M961.8,128 L965.6,131.6" fill="none" stroke="#b8303c" stroke-width="1" />
<circle cx="950" cy="126.9" r="3" fill="#a0171f"/>
<circle cx="958" cy="126.9" r="3" fill="#a0171f"/>
<circle cx="966" cy="126.9" r="3" fill="#a0171f"/>
<circle cx="950" cy="142.9" r="3" fill="#a0171f"/>
<text x="955.8" y="143.9" font-size="11.2" fill="#26314a" text-anchor="start" textLength="11.6" lengthAdjust="spacingAndGlyphs" >W</text>
<line x1="987" y1="74.9" x2="1019.1" y2="74.9" stroke="#a0171f" stroke-width="1.6" stroke-dasharray="3.4 2"/>
<line x1="987" y1="91.1" x2="1019.1" y2="91.1" stroke="#a0171f" stroke-width="1.6" stroke-dasharray="3.4 2"/>
<line x1="995.1" y1="67" x2="995.1" y2="98.8" stroke="#a0171f" stroke-width="1.6" stroke-dasharray="3.4 2"/>
<line x1="1011.1" y1="67" x2="1011.1" y2="98.8" stroke="#a0171f" stroke-width="1.6" stroke-dasharray="3.4 2"/>
<line x1="987" y1="74.9" x2="993" y2="74.9" stroke="#a0171f" stroke-width="1.6" />
<line x1="1013" y1="74.9" x2="1019" y2="74.9" stroke="#a0171f" stroke-width="1.6" />
<line x1="987" y1="91.1" x2="993" y2="91.1" stroke="#a0171f" stroke-width="1.6" />
<line x1="1013" y1="91.1" x2="1019" y2="91.1" stroke="#a0171f" stroke-width="1.6" />
<line x1="995.1" y1="67" x2="995.1" y2="73" stroke="#a0171f" stroke-width="1.6" />
<line x1="1011.1" y1="67" x2="1011.1" y2="73" stroke="#a0171f" stroke-width="1.6" />
<line x1="995.1" y1="93" x2="995.1" y2="98.8" stroke="#a0171f" stroke-width="1.6" />
<line x1="1011.1" y1="93" x2="1011.1" y2="98.8" stroke="#a0171f" stroke-width="1.6" />
<circle cx="995.1" cy="67" r="2.9" fill="#a0171f"/>
<circle cx="1011.1" cy="67" r="2.9" fill="#a0171f"/>
<circle cx="995.1" cy="98.8" r="2.9" fill="#a0171f"/>
<circle cx="1011.1" cy="98.8" r="2.9" fill="#a0171f"/>
<circle cx="987" cy="74.9" r="2.9" fill="#a0171f"/>
<circle cx="987" cy="91.1" r="2.9" fill="#a0171f"/>
<circle cx="1019.1" cy="74.9" r="2.9" fill="#a0171f"/>
<circle cx="1019.1" cy="91.1" r="2.9" fill="#a0171f"/>
<path d="M1032.5,78 L1040.6999999999998,78 L1036.6,85.5 Z" fill="#000" />
<path d="M999.9,144 V117.8 H1017 V144 M999.9,127.5 H1017 M999.9,137.7 H1017" fill="none" stroke="#404040" stroke-width="1.7" />
<line x1="987" y1="115.7" x2="1017.9" y2="115.7" stroke="#cf7a82" stroke-width="1.2" />
<path d="M987,115.4 L996.4,115.4 L991.7,120.2 Z" fill="#a0171f" />
<line x1="987" y1="125.9" x2="1017.9" y2="125.9" stroke="#cf7a82" stroke-width="1.2" />
<path d="M987,125.60000000000001 L996.4,125.60000000000001 L991.7,130.4 Z" fill="#a0171f" />
<line x1="987" y1="135.8" x2="1017.9" y2="135.8" stroke="#cf7a82" stroke-width="1.2" />
<path d="M987,135.5 L996.4,135.5 L991.7,140.3 Z" fill="#a0171f" />
<path d="M1064,67 V97.9 H1094.8" fill="none" stroke="#404040" stroke-width="2" />
<rect x="1067.1" y="77" width="5.8" height="17.8" fill="#a0171f" />
<rect x="1074.2" y="69.1" width="5.8" height="25.7" fill="#a0171f" />
<rect x="1081.2" y="84.1" width="5.8" height="10.7" fill="#a0171f" />
<rect x="1088.3" y="73" width="5.8" height="21.8" fill="#a0171f" />
<rect x="1063.1" y="120.1" width="21.8" height="1.6" fill="#404040" />
<rect x="1063.1" y="123.6" width="17.6" height="9.4" fill="#404040" />
<rect x="1063.1" y="135.1" width="17.6" height="1.6" fill="#404040" />
<circle cx="1085.9" cy="130.9" r="7.3" fill="#f0f0f0" stroke="#a0171f" stroke-width="1.3"/>
<rect x="1085.2" y="128.5" width="1.5" height="6.3" fill="#2e3b50" />
<rect x="1085.2" y="125.9" width="1.5" height="1.5" fill="#2e3b50" />
<circle cx="1137" cy="82.9" r="9.4" fill="none" stroke="#404040" stroke-width="6.6"/>
<rect x="1134" y="67.7" width="6" height="5" fill="#404040" transform="rotate(0 1137 82.9)"/>
<rect x="1134" y="67.7" width="6" height="5" fill="#404040" transform="rotate(45 1137 82.9)"/>
<rect x="1134" y="67.7" width="6" height="5" fill="#404040" transform="rotate(90 1137 82.9)"/>
<rect x="1134" y="67.7" width="6" height="5" fill="#404040" transform="rotate(135 1137 82.9)"/>
<rect x="1134" y="67.7" width="6" height="5" fill="#404040" transform="rotate(180 1137 82.9)"/>
<rect x="1134" y="67.7" width="6" height="5" fill="#404040" transform="rotate(225 1137 82.9)"/>
<rect x="1134" y="67.7" width="6" height="5" fill="#404040" transform="rotate(270 1137 82.9)"/>
<rect x="1134" y="67.7" width="6" height="5" fill="#404040" transform="rotate(315 1137 82.9)"/>
<path d="M1158.3999999999999,78 L1168.2,78 L1163.3,85.9 Z" fill="#000" />
<rect x="1185.1" y="74.6" width="20" height="6.6" fill="#5a2a2e" rx="1.2"/>
<rect x="1185.1" y="73.8" width="20" height="6.3" fill="#a0171f" rx="1.2"/>
<path d="M1218.1999999999998,71.9 L1228.0,71.9 L1223.1,79.9 Z" fill="#000" />
<path d="M1194.9,97.6 C1193.5,101.5 1188.9,106 1188.9,111 A6 6 0 0 0 1200.9,111 C1200.9,106 1196.3,101.5 1194.9,97.6 Z" fill="#a0171f" />
<path d="M1218.1999999999998,102 L1228.0,102 L1223.1,110 Z" fill="#000" />
<line x1="1114.9" y1="129" x2="1147.2" y2="129" stroke="#404040" stroke-width="1.7" stroke-dasharray="1.8 2.4"/>
<line x1="1131" y1="112.9" x2="1131" y2="145.2" stroke="#404040" stroke-width="1.7" stroke-dasharray="1.8 2.4"/>
<rect x="1124" y="121.9" width="14.1" height="14.2" fill="#a0171f" />
<path d="M1160.4,123.9 L1168.6,123.9 L1164.5,131.4 Z" fill="#000" />
<text x="1183.6" y="146.8" font-size="27.4" fill="#9a9a9a" text-anchor="start" textLength="19.6" lengthAdjust="spacingAndGlyphs" font-weight="bold">A</text>
<text x="1184.9" y="146.8" font-size="27.4" fill="#404040" text-anchor="start" textLength="19.6" lengthAdjust="spacingAndGlyphs" font-weight="bold">A</text>
<path d="M1218.1999999999998,132 L1228.0,132 L1223.1,140 Z" fill="#000" />
<rect x="25" y="240.4" width="37.3" height="112" fill="#fff8dc" />
<rect x="591.3" y="240.4" width="38.2" height="112" fill="#fff8dc" />
<rect x="62" y="259.5" width="572" height="75" fill="#fff8dc" />
<rect x="629.5" y="259.5" width="5" height="75" fill="#fff8dc" />
<line x1="43.5" y1="184.8" x2="43.5" y2="192.0" stroke="#000" stroke-width="1" />
<text x="47" y="193.70000000000002" font-size="8" fill="#000" text-anchor="start" textLength="12.3" lengthAdjust="spacing" >200</text>
<line x1="62.6" y1="184.9" x2="62.6" y2="187.10000000000002" stroke="#000" stroke-width="1" />
<line x1="66" y1="188.3" x2="98" y2="188.3" stroke="#222" stroke-width="1" />
<text x="102" y="193.70000000000002" font-size="8" fill="#000" text-anchor="start" textLength="16.3" lengthAdjust="spacing" >1000</text>
<line x1="125" y1="188.3" x2="315" y2="188.3" stroke="#222" stroke-width="1" />
<line x1="157" y1="184.8" x2="157" y2="192.0" stroke="#000" stroke-width="1" />
<text x="319.3" y="193.70000000000002" font-size="8" fill="#000" text-anchor="start" textLength="16.3" lengthAdjust="spacing" >3600</text>
<line x1="343" y1="188.3" x2="532" y2="188.3" stroke="#222" stroke-width="1" />
<line x1="497" y1="184.8" x2="497" y2="192.0" stroke="#000" stroke-width="1" />
<text x="537" y="193.70000000000002" font-size="8" fill="#000" text-anchor="start" textLength="16.3" lengthAdjust="spacing" >1000</text>
<line x1="560" y1="188.3" x2="591" y2="188.3" stroke="#222" stroke-width="1" />
<line x1="591.4" y1="184.8" x2="591.4" y2="192.0" stroke="#000" stroke-width="1" />
<text x="595" y="193.70000000000002" font-size="8" fill="#000" text-anchor="start" textLength="12.3" lengthAdjust="spacing" >200</text>
<line x1="610.4" y1="184.9" x2="610.4" y2="187.10000000000002" stroke="#000" stroke-width="1" />
<line x1="43.5" y1="401.2" x2="43.5" y2="408.4" stroke="#000" stroke-width="1" />
<text x="47" y="407.59999999999997" font-size="8" fill="#000" text-anchor="start" textLength="12.3" lengthAdjust="spacing" >200</text>
<line x1="66" y1="404.7" x2="98" y2="404.7" stroke="#222" stroke-width="1" />
<text x="102" y="407.59999999999997" font-size="8" fill="#000" text-anchor="start" textLength="16.3" lengthAdjust="spacing" >1000</text>
<line x1="125" y1="404.7" x2="315" y2="404.7" stroke="#222" stroke-width="1" />
<line x1="157" y1="401.2" x2="157" y2="408.4" stroke="#000" stroke-width="1" />
<text x="319.3" y="407.59999999999997" font-size="8" fill="#000" text-anchor="start" textLength="16.3" lengthAdjust="spacing" >3600</text>
<line x1="343" y1="404.7" x2="532" y2="404.7" stroke="#222" stroke-width="1" />
<line x1="497" y1="401.2" x2="497" y2="408.4" stroke="#000" stroke-width="1" />
<text x="537" y="407.59999999999997" font-size="8" fill="#000" text-anchor="start" textLength="16.3" lengthAdjust="spacing" >1000</text>
<line x1="560" y1="404.7" x2="591" y2="404.7" stroke="#222" stroke-width="1" />
<line x1="591.4" y1="401.2" x2="591.4" y2="408.4" stroke="#000" stroke-width="1" />
<text x="595" y="407.59999999999997" font-size="8" fill="#000" text-anchor="start" textLength="12.3" lengthAdjust="spacing" >200</text>
<text x="44.3" y="215.3" font-size="8" fill="#0000a0" text-anchor="start" textLength="4.2" lengthAdjust="spacing" >4</text>
<text x="611.3" y="215.3" font-size="8" fill="#0000a0" text-anchor="start" textLength="4.2" lengthAdjust="spacing" >5</text>
<line x1="43.5" y1="222" x2="43.5" y2="240.4" stroke="#000" stroke-width="1" />
<line x1="610.4" y1="222" x2="610.4" y2="240.4" stroke="#000" stroke-width="1" />
<line x1="21" y1="240.4" x2="66.6" y2="240.4" stroke="#000" stroke-width="1" />
<line x1="21" y1="352.3" x2="66.6" y2="352.3" stroke="#000" stroke-width="1" />
<line x1="25" y1="240.4" x2="25" y2="352.3" stroke="#000" stroke-width="1" />
<line x1="62.4" y1="240.4" x2="62.4" y2="259.5" stroke="#000" stroke-width="1" />
<line x1="62.4" y1="334.3" x2="62.4" y2="352.3" stroke="#000" stroke-width="1" />
<line x1="588" y1="240.4" x2="633.4" y2="240.4" stroke="#000" stroke-width="1" />
<line x1="588" y1="352.3" x2="633.4" y2="352.3" stroke="#000" stroke-width="1" />
<line x1="591.4" y1="240.4" x2="591.4" y2="259.5" stroke="#000" stroke-width="1" />
<line x1="591.4" y1="334.3" x2="591.4" y2="352.3" stroke="#000" stroke-width="1" />
<line x1="629.6" y1="240.4" x2="629.6" y2="259.5" stroke="#000" stroke-width="1" />
<line x1="629.6" y1="334.3" x2="629.6" y2="352.3" stroke="#000" stroke-width="1" />
<line x1="629.6" y1="259.5" x2="634" y2="259.5" stroke="#000" stroke-width="1" />
<line x1="629.6" y1="334.3" x2="634" y2="334.3" stroke="#000" stroke-width="1" />
<line x1="634" y1="252" x2="634" y2="341" stroke="#404040" stroke-width="1.6" />
<line x1="62.4" y1="259.5" x2="591.4" y2="259.5" stroke="#000" stroke-width="1" />
<line x1="62.4" y1="334.3" x2="591.4" y2="334.3" stroke="#707070" stroke-width="1.6" />
<line x1="81.4" y1="199.5" x2="81.4" y2="268" stroke="#000" stroke-width="1" />
<line x1="81.4" y1="199.5" x2="166" y2="199.5" stroke="#000" stroke-width="1" />
<text x="88" y="211" font-size="11.2" fill="#ff0000" text-anchor="start" textLength="146" lengthAdjust="spacing" >3-B16-01*&lt;--(active bar)</text>
<line x1="292" y1="199.5" x2="292" y2="268" stroke="#000" stroke-width="1" />
<line x1="292" y1="199.5" x2="376" y2="199.5" stroke="#000" stroke-width="1" />
<text x="298.5" y="211" font-size="11.2" fill="#000" text-anchor="start" textLength="58.8" lengthAdjust="spacing" >2-B16-03*</text>
<line x1="572.5" y1="199.5" x2="572.5" y2="269" stroke="#000" stroke-width="1" />
<line x1="488" y1="199.5" x2="572.5" y2="199.5" stroke="#000" stroke-width="1" />
<text x="493.6" y="211" font-size="11.2" fill="#000" text-anchor="start" textLength="58.8" lengthAdjust="spacing" >3-B16-05*</text>
<line x1="81.4" y1="327" x2="81.4" y2="396.5" stroke="#000" stroke-width="1" />
<line x1="81.4" y1="396.5" x2="166" y2="396.5" stroke="#000" stroke-width="1" />
<text x="88" y="388.8" font-size="11.2" fill="#000" text-anchor="start" textLength="58.8" lengthAdjust="spacing" >2-B16-02*</text>
<line x1="292" y1="327" x2="292" y2="396.5" stroke="#000" stroke-width="1" />
<line x1="292" y1="396.5" x2="376" y2="396.5" stroke="#000" stroke-width="1" />
<text x="298.5" y="388.8" font-size="11.2" fill="#000" text-anchor="start" textLength="58.8" lengthAdjust="spacing" >3-B16-04*</text>
<line x1="572.5" y1="327" x2="572.5" y2="396.5" stroke="#000" stroke-width="1" />
<line x1="488" y1="396.5" x2="572.5" y2="396.5" stroke="#000" stroke-width="1" />
<text x="493.6" y="388.8" font-size="11.2" fill="#000" text-anchor="start" textLength="58.8" lengthAdjust="spacing" >2-B16-06*</text>
<text x="69" y="254.2" font-size="8" fill="#000" text-anchor="start" textLength="8.2" lengthAdjust="spacing" >03</text>
<text x="148" y="254.2" font-size="8" fill="#e00000" text-anchor="start" textLength="8.2" lengthAdjust="spacing" >01</text>
<text x="504.2" y="254.2" font-size="8" fill="#000" text-anchor="start" textLength="8.2" lengthAdjust="spacing" >05</text>
<text x="582" y="254.2" font-size="8" fill="#000" text-anchor="start" textLength="8.2" lengthAdjust="spacing" >03</text>
<text x="63.3" y="344.3" font-size="8" fill="#000" text-anchor="start" textLength="8.2" lengthAdjust="spacing" >04</text>
<text x="148" y="344.3" font-size="8" fill="#000" text-anchor="start" textLength="8.2" lengthAdjust="spacing" >02</text>
<text x="498.3" y="344.3" font-size="8" fill="#000" text-anchor="start" textLength="8.2" lengthAdjust="spacing" >06</text>
<text x="582" y="344.3" font-size="8" fill="#000" text-anchor="start" textLength="8.2" lengthAdjust="spacing" >04</text>
<text x="58.3" y="287.2" font-size="8" fill="#ff0000" text-anchor="start" textLength="14" lengthAdjust="spacing" >77.5</text>
<text x="580" y="287.2" font-size="8" fill="#ff0000" text-anchor="start" textLength="14" lengthAdjust="spacing" >77.5</text>
<text x="46" y="375.4" font-size="8" fill="#ff0000" text-anchor="start" textLength="12.3" lengthAdjust="spacing" >200</text>
<text x="594" y="375.4" font-size="8" fill="#ff0000" text-anchor="start" textLength="12.3" lengthAdjust="spacing" >200</text>
<rect x="62" y="265" width="529" height="3.3" fill="#000" />
<path d="M642,269.6 H500.6 L497.6,275.6" fill="none" stroke="#000" stroke-width="3" />
<path d="M155.4,270.2 H33 Q27.6,270.2 27.6,276 V308.5" fill="none" stroke="#ff0000" stroke-width="3.2" />
<path d="M153,270.2 L157.3,274.8" fill="none" stroke="#ff0000" stroke-width="3.2" />
<path d="M27.6,308.5 V318 Q27.6,323 33,323 H156 " fill="none" stroke="#000" stroke-width="2.8" />
<path d="M153.2,323 L157,317.6" fill="none" stroke="#000" stroke-width="2.8" />
<rect x="62" y="325" width="529" height="2.7" fill="#000" />
<path d="M642,323.2 H500.6 L497.6,317.4" fill="none" stroke="#000" stroke-width="2.8" />
<path d="M61.5,272.4 L63.6,270.0 L65.7,272.4 L63.6,274.79999999999995 Z" fill="#000" />
<path d="M61.5,321.3 L63.6,318.90000000000003 L65.7,321.3 L63.6,323.7 Z" fill="#000" />
<path d="M588.1999999999999,272.4 L590.3,270.0 L592.4,272.4 L590.3,274.79999999999995 Z" fill="#000" />
<path d="M588.1999999999999,321.3 L590.3,318.90000000000003 L592.4,321.3 L590.3,323.7 Z" fill="#000" />
<rect x="43.5" y="314.8" width="566.8" height="2" fill="#000090" />
<line x1="62.5" y1="296.8" x2="591.4" y2="296.8" stroke="#000" stroke-width="1" />
<line x1="69.6" y1="290" x2="69.6" y2="304" stroke="#000" stroke-width="1" />
<line x1="584.5" y1="290" x2="584.5" y2="304" stroke="#000" stroke-width="1" />
<path d="M85.21,294.2 V299 M100.81,294.2 V299 M116.42,294.2 V299 M132.02,294.2 V299 M147.63,294.2 V299 M163.24,294.2 V299 M178.84,294.2 V299 M194.45,294.2 V299 M210.05,294.2 V299 M225.66,294.2 V299 M241.27,294.2 V299 M256.87,294.2 V299 M272.48,294.2 V299 M288.08,294.2 V299 M303.69,294.2 V299 M319.30,294.2 V299 M334.90,294.2 V299 M350.51,294.2 V299 M366.11,294.2 V299 M381.72,294.2 V299 M397.33,294.2 V299 M412.93,294.2 V299 M428.54,294.2 V299 M444.14,294.2 V299 M459.75,294.2 V299 M475.36,294.2 V299 M490.96,294.2 V299 M506.57,294.2 V299 M522.17,294.2 V299 M537.78,294.2 V299 M553.39,294.2 V299 M568.99,294.2 V299 " fill="none" stroke="#000" stroke-width="1" />
<text x="269" y="308.2" font-size="7.4" fill="#ff0000" text-anchor="start" textLength="109" lengthAdjust="spacingAndGlyphs" >34x2 B10 legs@165 (torsional)</text>
<line x1="183.5" y1="269" x2="183.5" y2="323.5" stroke="#109010" stroke-width="1" />
<line x1="383" y1="311" x2="383" y2="349" stroke="#303030" stroke-width="1" />
<line x1="383" y1="349" x2="467.5" y2="349" stroke="#808080" stroke-width="1" />
<text x="384.3" y="361.6" font-size="11.2" fill="#a0a0a8" text-anchor="start" textLength="114" lengthAdjust="spacing" >6-B12-07*nib lacers</text>
<rect x="43.5" y="423.7" width="567" height="9.2" fill="#fff" stroke="#303030" stroke-width="1" />
<line x1="62.5" y1="423.7" x2="62.5" y2="433" stroke="#000" stroke-width="1.6" />
<line x1="69.6" y1="423.7" x2="69.6" y2="433" stroke="#303030" stroke-width="1" />
<line x1="584.5" y1="423.7" x2="584.5" y2="433" stroke="#303030" stroke-width="1" />
<line x1="591.4" y1="423.7" x2="591.4" y2="433" stroke="#000" stroke-width="1.6" />
<path d="M371.4,416.7 V439.6" fill="none" stroke="#ff0000" stroke-width="1.2" />
<path d="M360,416.6 L371.6,416.6 L371.6,418.6 Z" fill="#ff0000" />
<path d="M360,439.8 L371.6,439.8 L371.6,437.8 Z" fill="#ff0000" />
<circle cx="27.5" cy="267" r="1.4" fill="#1515a0"/>
<circle cx="27.5" cy="326.6" r="1.4" fill="#1515a0"/>
<circle cx="38.2" cy="267" r="1.4" fill="#1515a0"/>
<circle cx="38.2" cy="326.6" r="1.4" fill="#1515a0"/>
<circle cx="48.8" cy="267" r="1.4" fill="#1515a0"/>
<circle cx="48.8" cy="326.6" r="1.4" fill="#1515a0"/>
<circle cx="59.5" cy="267" r="1.4" fill="#1515a0"/>
<circle cx="59.5" cy="326.6" r="1.4" fill="#1515a0"/>
<circle cx="594.5" cy="267" r="1.4" fill="#1515a0"/>
<circle cx="594.5" cy="326.6" r="1.4" fill="#1515a0"/>
<circle cx="605.3" cy="267" r="1.4" fill="#1515a0"/>
<circle cx="605.3" cy="326.6" r="1.4" fill="#1515a0"/>
<circle cx="616" cy="267" r="1.4" fill="#1515a0"/>
<circle cx="616" cy="326.6" r="1.4" fill="#1515a0"/>
<circle cx="626.8" cy="267" r="1.4" fill="#1515a0"/>
<circle cx="626.8" cy="326.6" r="1.4" fill="#1515a0"/>
<path d="M43.50,606.3 V488.69 M52.36,606.3 V497.81 M61.21,606.3 V506.69 M70.07,606.3 V515.31 M78.92,606.3 V523.68 M87.78,606.3 V531.80 M96.64,606.3 V539.67 M105.49,606.3 V547.29 M114.35,606.3 V554.65 M123.21,606.3 V561.76 M132.06,606.3 V568.63 M140.92,606.3 V575.24 M149.77,606.3 V581.60 M158.63,606.3 V587.70 M167.49,606.3 V593.56 M176.34,606.3 V599.16 M185.20,606.3 V604.52 M194.06,606.3 V609.62 M202.91,606.3 V614.47 M211.77,606.3 V619.06 M220.62,606.3 V623.41 M229.48,606.3 V627.50 M238.34,606.3 V631.35 M247.19,606.3 V634.94 M256.05,606.3 V638.28 M264.91,606.3 V641.37 M273.76,606.3 V644.20 M282.62,606.3 V646.79 M291.47,606.3 V649.12 M300.33,606.3 V651.21 M309.19,606.3 V653.04 M318.04,606.3 V654.62 M326.90,606.3 V655.94 M335.76,606.3 V657.02 M344.61,606.3 V657.84 M353.47,606.3 V658.42 M362.32,606.3 V658.74 M371.18,606.3 V658.81 M380.04,606.3 V658.63 M388.89,606.3 V658.19 M397.75,606.3 V657.51 M406.61,606.3 V656.57 M415.46,606.3 V655.38 M424.32,606.3 V653.94 M433.17,606.3 V652.25 M442.03,606.3 V650.31 M450.89,606.3 V648.11 M459.74,606.3 V645.67 M468.60,606.3 V642.97 M477.46,606.3 V640.02 M486.31,606.3 V636.82 M495.17,606.3 V633.37 M504.02,606.3 V629.67 M512.88,606.3 V625.71 M521.74,606.3 V621.50 M530.59,606.3 V617.05 M539.45,606.3 V612.34 M548.31,606.3 V607.37 M557.16,606.3 V602.16 M566.02,606.3 V596.70 M574.88,606.3 V590.98 M583.73,606.3 V585.01 M592.59,606.3 V578.79 M601.44,606.3 V572.32 M610.30,606.3 V565.60 " fill="none" stroke="#1c1c94" stroke-width="1" />
<polyline points="43.50,488.69 47.93,493.28 52.36,497.81 56.78,502.28 61.21,506.69 65.64,511.03 70.07,515.31 74.50,519.53 78.92,523.68 83.35,527.77 87.78,531.80 92.21,535.77 96.64,539.67 101.07,543.51 105.49,547.29 109.92,551.00 114.35,554.65 118.78,558.24 123.21,561.76 127.63,565.23 132.06,568.63 136.49,571.96 140.92,575.24 145.35,578.45 149.77,581.60 154.20,584.68 158.63,587.70 163.06,590.66 167.49,593.56 171.92,596.39 176.34,599.16 180.77,601.87 185.20,604.52 189.63,607.10 194.06,609.62 198.48,612.07 202.91,614.47 207.34,616.80 211.77,619.06 216.20,621.27 220.62,623.41 225.05,625.49 229.48,627.50 233.91,629.46 238.34,631.35 242.77,633.17 247.19,634.94 251.62,636.64 256.05,638.28 260.48,639.85 264.91,641.37 269.33,642.82 273.76,644.20 278.19,645.53 282.62,646.79 287.05,647.99 291.47,649.12 295.90,650.20 300.33,651.21 304.76,652.15 309.19,653.04 313.62,653.86 318.04,654.62 322.47,655.31 326.90,655.94 331.33,656.51 335.76,657.02 340.18,657.46 344.61,657.84 349.04,658.16 353.47,658.42 357.90,658.61 362.32,658.74 366.75,658.80 371.18,658.81 375.61,658.75 380.04,658.63 384.47,658.44 388.89,658.19 393.32,657.88 397.75,657.51 402.18,657.07 406.61,656.57 411.03,656.01 415.46,655.38 419.89,654.69 424.32,653.94 428.75,653.13 433.17,652.25 437.60,651.31 442.03,650.31 446.46,649.24 450.89,648.11 455.32,646.92 459.74,645.67 464.17,644.35 468.60,642.97 473.03,641.53 477.46,640.02 481.88,638.45 486.31,636.82 490.74,635.13 495.17,633.37 499.60,631.55 504.02,629.67 508.45,627.72 512.88,625.71 517.31,623.64 521.74,621.50 526.17,619.31 530.59,617.05 535.02,614.72 539.45,612.34 543.88,609.89 548.31,607.37 552.73,604.80 557.16,602.16 561.59,599.46 566.02,596.70 570.45,593.87 574.88,590.98 579.30,588.03 583.73,585.01 588.16,581.93 592.59,578.79 597.02,575.59 601.44,572.32 605.87,568.99 610.30,565.60" fill="none" stroke="#000080" stroke-width="1.1"/>
<line x1="43.5" y1="460.6" x2="43.5" y2="697.2" stroke="#000080" stroke-width="1.1" />
<line x1="610.3" y1="460.6" x2="610.3" y2="697.2" stroke="#000080" stroke-width="1.1" />
<line x1="43.5" y1="606.3" x2="610.3" y2="606.3" stroke="#000080" stroke-width="1.2" />
<line x1="43.5" y1="460.6" x2="289.3" y2="460.6" stroke="#ff0000" stroke-width="1.1" />
<line x1="388.6" y1="460.6" x2="610.3" y2="460.6" stroke="#ff0000" stroke-width="1.1" />
<line x1="43.5" y1="697.2" x2="359" y2="697.2" stroke="#55a555" stroke-width="2" />
<line x1="388.6" y1="697.2" x2="610.3" y2="697.2" stroke="#55a555" stroke-width="2" />
<text x="14" y="467.6" font-size="10" fill="#ff0000" text-anchor="start" textLength="23" lengthAdjust="spacing" >69.79</text>
<text x="613" y="467.6" font-size="10" fill="#ff0000" text-anchor="start" textLength="23" lengthAdjust="spacing" >69.79</text>
<text x="14.5" y="495.2" font-size="10" fill="#000080" text-anchor="start" textLength="22.5" lengthAdjust="spacing" >15.98</text>
<text x="616.3" y="572.2" font-size="10" fill="#000080" text-anchor="start" textLength="17.5" lengthAdjust="spacing" >5.53</text>
<text x="29" y="616.3" font-size="10" fill="#ff0000" text-anchor="start" textLength="4.6" lengthAdjust="spacing" >4</text>
<text x="14" y="700.2" font-size="10" fill="#ff0000" text-anchor="start" textLength="23" lengthAdjust="spacing" >41.75</text>
<text x="613" y="700.2" font-size="10" fill="#ff0000" text-anchor="start" textLength="23" lengthAdjust="spacing" >41.75</text>
<rect x="361.5" y="658" width="23" height="9.5" fill="#fff" />
<text x="362.8" y="666.4" font-size="10" fill="#000080" text-anchor="start" textLength="18.2" lengthAdjust="spacing" >7.13</text>
<text x="361.2" y="700.2" font-size="10" fill="#ff0000" text-anchor="start" textLength="22.8" lengthAdjust="spacing" >73.12</text>
<text x="361" y="467.4" font-size="10" fill="#ff0000" text-anchor="start" textLength="22.3" lengthAdjust="spacing" >-3.74</text>
<rect x="290" y="452" width="74" height="10.3" fill="#fff" />
<line x1="270" y1="456.3" x2="289.5" y2="456.3" stroke="#ff0000" stroke-width="1.1" />
<line x1="369" y1="456.3" x2="384" y2="456.3" stroke="#ff0000" stroke-width="1.1" />
<text x="291" y="460.4" font-size="9.6" fill="#ff0000" text-anchor="start" textLength="72" lengthAdjust="spacingAndGlyphs" >Moment Capacity</text>
<line x1="270" y1="474.3" x2="292" y2="474.3" stroke="#000080" stroke-width="1.1" />
<line x1="366" y1="474.3" x2="384" y2="474.3" stroke="#000080" stroke-width="1.1" />
<text x="294" y="478.3" font-size="9.6" fill="#000080" text-anchor="start" textLength="66" lengthAdjust="spacingAndGlyphs" >Moment Applied</text>
<text x="14.4" y="732.6" font-size="11.4" fill="#ff0000" text-anchor="start" >*</text>
<text x="22.7" y="732.6" font-size="11.4" fill="#ff0000" text-anchor="start" textLength="14.2" lengthAdjust="spacingAndGlyphs" >Bar</text>
<text x="41.7" y="732.6" font-size="11.4" fill="#ff0000" text-anchor="start" textLength="22.7" lengthAdjust="spacingAndGlyphs" >mark</text>
<text x="67.8" y="732.6" font-size="11.4" fill="#ff0000" text-anchor="start" textLength="40.0" lengthAdjust="spacingAndGlyphs" >numbers</text>
<text x="112" y="732.6" font-size="11.4" fill="#ff0000" text-anchor="start" textLength="43.4" lengthAdjust="spacingAndGlyphs" >displayed</text>
<text x="159.7" y="732.6" font-size="11.4" fill="#ff0000" text-anchor="start" textLength="11.2" lengthAdjust="spacingAndGlyphs" >on</text>
<text x="175.2" y="732.6" font-size="11.4" fill="#ff0000" text-anchor="start" textLength="30.0" lengthAdjust="spacingAndGlyphs" >screen</text>
<text x="209.6" y="732.6" font-size="11.4" fill="#ff0000" text-anchor="start" textLength="15.5" lengthAdjust="spacingAndGlyphs" >are</text>
<text x="228.9" y="732.6" font-size="11.4" fill="#ff0000" text-anchor="start" textLength="20.9" lengthAdjust="spacingAndGlyphs" >local</text>
<text x="253.3" y="732.6" font-size="11.4" fill="#ff0000" text-anchor="start" textLength="16.5" lengthAdjust="spacingAndGlyphs" >and</text>
<text x="274" y="732.6" font-size="11.4" fill="#ff0000" text-anchor="start" textLength="12" lengthAdjust="spacingAndGlyphs" >for</text>
<text x="290.4" y="732.6" font-size="11.4" fill="#ff0000" text-anchor="start" textLength="52.6" lengthAdjust="spacingAndGlyphs" >curtailment</text>
<text x="346.9" y="732.6" font-size="11.4" fill="#ff0000" text-anchor="start" textLength="41.7" lengthAdjust="spacingAndGlyphs" >guidence</text>
<text x="392.4" y="732.6" font-size="11.4" fill="#ff0000" text-anchor="start" textLength="22.8" lengthAdjust="spacingAndGlyphs" >only.</text>
<path d="M664,179.6 L676.3,192 H673 V205 H665.6 V199 H662.6 V205 H655 V192 H651.8 Z" fill="#808080" />
<path d="M715.2,207.2 L766.8,222 L736.6,247.5 L684.8,232.7 Z" fill="#b2b2b2" stroke="#9c9c9c" stroke-width="0.6" />
<path d="M684.8,232.7 L736.6,247.5 L736.6,300.6 L684.8,285.5 Z" fill="#adadad" stroke="#9c9c9c" stroke-width="0.6" />
<path d="M736.6,247.5 L766.8,222 L767.4,274.2 L736.6,300.6 Z" fill="#a9a9a9" stroke="#9c9c9c" stroke-width="0.6" />
<text font-size="15.5" fill="#111" text-anchor="middle" transform="matrix(0.981,0.280,0,1,710.6,272)">Front</text>
<text font-size="14" fill="#111" text-anchor="middle" transform="matrix(0.572,-0.483,0,1,752.3,267.5)">Right</text>
<text font-size="14.5" fill="#111" text-anchor="middle" transform="matrix(0.981,0.280,-0.572,0.483,722.4,230.4)">Top</text>
<path d="M833.40,646.20 L833.40,308.45 M881.20,604.70 L881.20,266.95 M929.00,563.20 L929.00,225.45 M916.10,670.15 L916.10,332.40 M963.90,628.65 L963.90,290.90 M1011.70,587.15 L1011.70,249.40 M998.80,694.10 L998.80,356.35 M1046.60,652.60 L1046.60,314.85 M1094.40,611.10 L1094.40,273.35 " fill="none" stroke="#333333" stroke-width="1.0" />
<path d="M833.40,597.95 L998.80,645.85 M881.20,556.45 L1046.60,604.35 M929.00,514.95 L1094.40,562.85 M833.40,597.95 L929.00,514.95 M916.10,621.90 L1011.70,538.90 M998.80,645.85 L1094.40,562.85 M833.40,549.70 L998.80,597.60 M881.20,508.20 L1046.60,556.10 M929.00,466.70 L1094.40,514.60 M833.40,549.70 L929.00,466.70 M916.10,573.65 L1011.70,490.65 M998.80,597.60 L1094.40,514.60 M833.40,501.45 L998.80,549.35 M881.20,459.95 L1046.60,507.85 M929.00,418.45 L1094.40,466.35 M833.40,501.45 L929.00,418.45 M916.10,525.40 L1011.70,442.40 M998.80,549.35 L1094.40,466.35 M833.40,453.20 L998.80,501.10 M881.20,411.70 L1046.60,459.60 M929.00,370.20 L1094.40,418.10 M833.40,453.20 L929.00,370.20 M916.10,477.15 L1011.70,394.15 M998.80,501.10 L1094.40,418.10 M833.40,404.95 L998.80,452.85 M881.20,363.45 L1046.60,411.35 M929.00,321.95 L1094.40,369.85 M833.40,404.95 L929.00,321.95 M916.10,428.90 L1011.70,345.90 M998.80,452.85 L1094.40,369.85 M833.40,356.70 L998.80,404.60 M881.20,315.20 L1046.60,363.10 M929.00,273.70 L1094.40,321.60 M833.40,356.70 L929.00,273.70 M916.10,380.65 L1011.70,297.65 M998.80,404.60 L1094.40,321.60 M833.40,308.45 L998.80,356.35 M881.20,266.95 L1046.60,314.85 M929.00,225.45 L1094.40,273.35 M833.40,308.45 L929.00,225.45 M916.10,332.40 L1011.70,249.40 M998.80,356.35 L1094.40,273.35 " fill="none" stroke="#141414" stroke-width="1.05" />
<circle cx="833.40" cy="646.20" r="2.6" fill="#0000d8"/>
<circle cx="881.20" cy="604.70" r="2.6" fill="#0000d8"/>
<circle cx="929.00" cy="563.20" r="2.6" fill="#0000d8"/>
<circle cx="916.10" cy="670.15" r="2.6" fill="#0000d8"/>
<circle cx="963.90" cy="628.65" r="2.6" fill="#0000d8"/>
<circle cx="1011.70" cy="587.15" r="2.6" fill="#0000d8"/>
<circle cx="998.80" cy="694.10" r="2.6" fill="#0000d8"/>
<circle cx="1046.60" cy="652.60" r="2.6" fill="#0000d8"/>
<circle cx="1094.40" cy="611.10" r="2.6" fill="#0000d8"/>
<path d="M830.6,597.7 L836.2,593 L918.6,616.6 L916,621.9 L831.3,600 Z" fill="#ff0000" />
<path d="M831.2,599.7 L916,621.7 L914.8,625.6 L832.6,602.6 L830.6,600.6 Z" fill="#6a0000" />
<path d="M832,600.9 L915.2,623.4" fill="none" stroke="#c00000" stroke-width="0.9" stroke-dasharray="1.2 1.2"/>
<path d="M918.6,616.4 L919.6,618.4 L916.6,625.4 L913.2,624.6 L915.6,621.6 Z" fill="#140000" />
<line x1="1207" y1="670.7" x2="1207" y2="632" stroke="#68b468" stroke-width="2.1" />
<path d="M1207,627.6 L1205,634.6 H1209 Z" fill="#0a640a" />
<line x1="1207" y1="670.7" x2="1228.5" y2="652.1" stroke="#0000ff" stroke-width="1.2" />
<path d="M1232,649.1 L1228.6,654.6 L1225.8,651.3 Z" fill="#0000c8" />
<line x1="1207" y1="670.7" x2="1246" y2="682.3" stroke="#ff0000" stroke-width="1.2" />
<path d="M1250.8,683.7 L1243.6,683.7 L1244.8,679.8 Z" fill="#b00000" />
<text x="1210.6" y="638.6" font-size="10.5" fill="#111" text-anchor="start" textLength="6" lengthAdjust="spacingAndGlyphs" >Y</text>
<text x="1235.8" y="659.8" font-size="10.5" fill="#111" text-anchor="start" textLength="5.6" lengthAdjust="spacingAndGlyphs" >Z</text>
<text x="1253.6" y="693.8" font-size="10.5" fill="#111" text-anchor="start" textLength="6" lengthAdjust="spacingAndGlyphs" >X</text>
<rect x="657" y="753" width="17" height="16" fill="#f5f5f5" />
<rect x="662.5" y="757.5" width="8.6" height="8.4" fill="none" stroke="#000" stroke-width="1" />
<rect x="662" y="757" width="9.6" height="2" fill="#000" />
<path d="M922.7,791.6 H1006.2 V838.8 H1062.8 V875.8 H866.3 V838.8 H922.7 Z" fill="#fff8dc" stroke="#111" stroke-width="1.3" />
<rect x="909.5" y="790.5" width="13.9" height="9.2" fill="#fff" />
<rect x="909.5" y="868.5" width="13.9" height="8.2" fill="#fff" />
<text x="910.6" y="797.3" font-size="7.8" fill="#000090" text-anchor="start" textLength="7.8" lengthAdjust="spacingAndGlyphs" >30</text>
<text x="910.6" y="875.2" font-size="7.8" fill="#000090" text-anchor="start" textLength="7.8" lengthAdjust="spacingAndGlyphs" >30</text>
<rect x="930.4" y="797.7" width="68.3" height="72.1" fill="none" stroke="#222" stroke-width="1.2" rx="5.5"/>
<ellipse cx="939.4" cy="802.8" rx="2.2" ry="1.7" fill="#000090"/>
<ellipse cx="989.7" cy="802.8" rx="2.2" ry="1.7" fill="#000090"/>
<ellipse cx="939.4" cy="864.7" rx="2.2" ry="1.7" fill="#000090"/>
<ellipse cx="964.6" cy="864.7" rx="2.2" ry="1.7" fill="#000090"/>
<ellipse cx="989.7" cy="864.7" rx="2.2" ry="1.7" fill="#000090"/>
<line x1="874.8" y1="846.6" x2="1054.1" y2="846.6" stroke="#1a1a9a" stroke-width="1" />
<circle cx="883.2" cy="850" r="1.25" fill="#2a9a2a"/>
<circle cx="937" cy="850" r="1.25" fill="#2a9a2a"/>
<circle cx="992.4" cy="850" r="1.25" fill="#2a9a2a"/>
<circle cx="1045.9" cy="850" r="1.25" fill="#2a9a2a"/>
<path d="M1012,846.2 V814.9 H1083.6" fill="none" stroke="#ff2020" stroke-width="1.2" />
<text x="1086.5" y="823" font-size="7.8" fill="#0000ff" text-anchor="start" textLength="38.8" lengthAdjust="spacingAndGlyphs" >31-B12-200</text>
<line x1="866.3" y1="817.3" x2="866.3" y2="838.8" stroke="#111" stroke-width="1" />
<path d="M861.4,831.6 H871.1999999999999 L866.3,838.6 Z" fill="none" stroke="#111" stroke-width="1" />
<line x1="1062.8" y1="817.3" x2="1062.8" y2="838.8" stroke="#111" stroke-width="1" />
<path d="M1057.8999999999999,831.6 H1067.7 L1062.8,838.6 Z" fill="none" stroke="#111" stroke-width="1" />
<line x1="922.7" y1="760.2" x2="957.8" y2="760.2" stroke="#111" stroke-width="1" />
<line x1="976.8" y1="760.2" x2="1006.2" y2="760.2" stroke="#111" stroke-width="1" />
<line x1="922.7" y1="756.6" x2="922.7" y2="763.8000000000001" stroke="#111" stroke-width="1" />
<line x1="1006.2" y1="756.6" x2="1006.2" y2="763.8000000000001" stroke="#111" stroke-width="1" />
<text x="958.6" y="763.0" font-size="7.8" fill="#000090" text-anchor="start" textLength="11.4" lengthAdjust="spacingAndGlyphs" >300</text>
<line x1="866.3" y1="904.5" x2="957.6" y2="904.5" stroke="#111" stroke-width="1" />
<line x1="976.6" y1="904.5" x2="1062.8" y2="904.5" stroke="#111" stroke-width="1" />
<line x1="866.3" y1="900.9" x2="866.3" y2="908.1" stroke="#111" stroke-width="1" />
<line x1="1062.8" y1="900.9" x2="1062.8" y2="908.1" stroke="#111" stroke-width="1" />
<text x="958.3" y="907.3" font-size="7.8" fill="#000090" text-anchor="start" textLength="11.4" lengthAdjust="spacingAndGlyphs" >700</text>
<line x1="846.5" y1="791.6" x2="846.5" y2="827.5" stroke="#111" stroke-width="1" />
<line x1="846.5" y1="839" x2="846.5" y2="875.8" stroke="#111" stroke-width="1" />
<line x1="841.6" y1="791.6" x2="851.8" y2="791.6" stroke="#111" stroke-width="1" />
<line x1="841.6" y1="875.8" x2="851.8" y2="875.8" stroke="#111" stroke-width="1" />
<text x="839" y="836" font-size="7.8" fill="#000090" text-anchor="start" textLength="12.2" lengthAdjust="spacingAndGlyphs" >400</text>
<line x1="1077.6" y1="838.8" x2="1077.6" y2="851.5" stroke="#111" stroke-width="1" />
<line x1="1077.6" y1="862.5" x2="1077.6" y2="875.8" stroke="#111" stroke-width="1" />
<line x1="1072.7" y1="838.8" x2="1082.9" y2="838.8" stroke="#111" stroke-width="1" />
<line x1="1072.7" y1="875.8" x2="1082.9" y2="875.8" stroke="#111" stroke-width="1" />
<text x="1070.8" y="860" font-size="7.8" fill="#000090" text-anchor="start" textLength="11.4" lengthAdjust="spacingAndGlyphs" >175</text>
<text x="937.4" y="785.4" font-size="7.8" fill="#000" text-anchor="start" textLength="4" lengthAdjust="spacingAndGlyphs" >3</text>
<text x="988" y="785.4" font-size="7.8" fill="#000" text-anchor="start" textLength="4" lengthAdjust="spacingAndGlyphs" >3</text>
<text x="937.4" y="886" font-size="7.8" fill="#000" text-anchor="start" textLength="4.1" lengthAdjust="spacingAndGlyphs" >4</text>
<text x="962.3" y="886" font-size="7.8" fill="#000" text-anchor="start" textLength="4.1" lengthAdjust="spacingAndGlyphs" >4</text>
<text x="988" y="886" font-size="7.8" fill="#000" text-anchor="start" textLength="4.1" lengthAdjust="spacingAndGlyphs" >4</text>
<text x="910.6" y="896" font-size="7.8" fill="#000090" text-anchor="start" textLength="7.8" lengthAdjust="spacingAndGlyphs" >30</text>
<line x1="924" y1="894.5" x2="931.2" y2="894.5" stroke="#111" stroke-width="1" />
<line x1="931.2" y1="891.2" x2="931.2" y2="897.8" stroke="#111" stroke-width="1" />
<line x1="998.7" y1="894.5" x2="1006.2" y2="894.5" stroke="#111" stroke-width="1" />
<line x1="998.7" y1="891.2" x2="998.7" y2="897.8" stroke="#111" stroke-width="1" />
<line x1="1006.2" y1="891.2" x2="1006.2" y2="897.8" stroke="#111" stroke-width="1" />
<text x="1011.5" y="896" font-size="7.8" fill="#000090" text-anchor="start" textLength="7.8" lengthAdjust="spacingAndGlyphs" >30</text>
<rect x="8" y="745" width="26" height="186" fill="#f6f6f6" rx="3"/>
<defs><linearGradient id="vs" x1="0" y1="0" x2="0" y2="1"><stop offset="0" stop-color="#ececec"/><stop offset="0.7" stop-color="#dcdcdc"/><stop offset="1" stop-color="#a0a0a0"/></linearGradient></defs>
<rect x="34" y="772" width="1" height="158" fill="url(#vs)" />
<rect x="39" y="750.3" width="53.3" height="20.700000000000045" fill="#f5f5f5" rx="1.5"/>
<rect x="177.6" y="750.3" width="94.4" height="20.700000000000045" fill="#f5f5f5" rx="1.5"/>
<rect x="274.5" y="750.3" width="93.5" height="20.700000000000045" fill="#f5f5f5" rx="1.5"/>
<rect x="371" y="750.3" width="96" height="20.700000000000045" fill="#f5f5f5" rx="1.5"/>
<rect x="94" y="749.5" width="81.5" height="21.5" fill="#ffffff" rx="1.5"/>
<line x1="36" y1="770.9" x2="650.5" y2="770.9" stroke="#ffffff" stroke-width="1.2" />
<text x="50.6" y="764.8" font-size="11.4" fill="#000" text-anchor="start" textLength="26.6" lengthAdjust="spacingAndGlyphs" >Briefs</text>
<text x="108" y="766.8" font-size="11.4" fill="#000" text-anchor="start" textLength="52.7" lengthAdjust="spacingAndGlyphs" >Beam Data</text>
<text x="195.3" y="764.8" font-size="11.4" fill="#000" text-anchor="start" textLength="56" lengthAdjust="spacingAndGlyphs" >Links &amp; Nibs</text>
<text x="287.3" y="764.8" font-size="11.4" fill="#000" text-anchor="start" textLength="65.5" lengthAdjust="spacingAndGlyphs" >Redistribution</text>
<text x="383.3" y="764.8" font-size="11.4" fill="#000" text-anchor="start" textLength="68.5" lengthAdjust="spacingAndGlyphs" >Super Member</text>
<rect x="601" y="747" width="20" height="20" fill="#f5f5f5" />
<rect x="624" y="747" width="20" height="20" fill="#f5f5f5" />
<path d="M607.2,757.2 L612,752.6 V755.4 H616.2 V759 H612 V761.8 Z" fill="#2f6fe0" stroke="#1c4fb4" stroke-width="0.3" />
<path d="M638.8,757.2 L634,752.6 V755.4 H629.8 V759 H634 V761.8 Z" fill="#2f6fe0" stroke="#1c4fb4" stroke-width="0.3" />
<rect x="48" y="773.8" width="560.5" height="22.6" fill="#f8f8f8" rx="2.5"/>
<line x1="73.6" y1="779.2" x2="73.6" y2="791.8" stroke="#a8a8a8" stroke-width="1" />
<line x1="146.4" y1="779.2" x2="146.4" y2="791.8" stroke="#a8a8a8" stroke-width="1" />
<line x1="215.6" y1="779.2" x2="215.6" y2="791.8" stroke="#a8a8a8" stroke-width="1" />
<line x1="326.4" y1="779.2" x2="326.4" y2="791.8" stroke="#a8a8a8" stroke-width="1" />
<line x1="416.2" y1="779.2" x2="416.2" y2="791.8" stroke="#a8a8a8" stroke-width="1" />
<line x1="524.3" y1="779.2" x2="524.3" y2="791.8" stroke="#a8a8a8" stroke-width="1" />
<line x1="608.4" y1="778" x2="608.4" y2="796.4" stroke="#b0b0b0" stroke-width="1" />
<path d="M52.5,788.2 L59.5,781 Q60.5,780.2 61.6,781 L64.4,783.4 Q65.2,784.4 64.4,785.3 L57.4,791.6 H55 Z" fill="#f4f6fa" stroke="#4a6690" stroke-width="1" />
<path d="M52.6,788.3 L55,791.5 H57.4 L54.6,787 Z" fill="#c8d4e8" stroke="#4a6690" stroke-width="0.6" />
<line x1="57" y1="791.8" x2="66.3" y2="791.8" stroke="#202020" stroke-width="1.2" />
<rect x="80" y="782.2" width="14" height="2" fill="#000" />
<rect x="80" y="787" width="14" height="2" fill="#000" />
<rect x="80" y="787" width="6" height="2" fill="#ff0000" />
<rect x="103.1" y="782.2" width="14" height="2" fill="#000" />
<rect x="103.1" y="787" width="14" height="2" fill="#000" />
<rect x="105.19999999999999" y="787" width="9.9" height="2" fill="#ff0000" />
<rect x="126.2" y="782.2" width="14" height="2" fill="#000" />
<rect x="126.2" y="787" width="14" height="2" fill="#000" />
<rect x="134.0" y="787" width="6.2" height="2" fill="#ff0000" />
<rect x="153" y="782.2" width="14" height="2" fill="#000" />
<rect x="153" y="782.2" width="6" height="2" fill="#ff0000" />
<rect x="153" y="787" width="14" height="2" fill="#000" />
<rect x="174" y="782.2" width="14" height="2" fill="#000" />
<rect x="176" y="782.2" width="10" height="2" fill="#ff0000" />
<rect x="174" y="787" width="14" height="2" fill="#000" />
<rect x="195" y="782.2" width="14" height="2" fill="#000" />
<rect x="203" y="782.2" width="6" height="2" fill="#ff0000" />
<rect x="195" y="787" width="14" height="2" fill="#000" />
<path d="M224.2,786.4 L222,784 Q221.2,783 222.2,782.6 Q223.2,782.4 224,783.2 L225.6,784.8 V781.2 Q225.6,780.2 226.5,780.2 Q227.4,780.2 227.4,781.2 V780.2 Q227.4,779.4 228.4,779.4 Q229.4,779.4 229.4,780.2 V781 Q229.4,780.2 230.4,780.2 Q231.4,780.2 231.4,781 V782.4 Q231.4,781.6 232.4,781.6 Q233.6,781.6 233.6,782.6 V788 Q233.6,792.6 229.4,792.6 H228.4 Q225.8,792.6 224.2,786.4 Z" fill="#e0b860" stroke="#7a5a20" stroke-width="0.8" />
<line x1="227.4" y1="781.4" x2="227.4" y2="785.4" stroke="#7a5a20" stroke-width="0.6" />
<line x1="229.4" y1="781.2" x2="229.4" y2="785.4" stroke="#7a5a20" stroke-width="0.6" />
<line x1="231.4" y1="782.4" x2="231.4" y2="785.6" stroke="#7a5a20" stroke-width="0.6" />
<rect x="246" y="779.2" width="1.9" height="1.9" fill="#e00000" />
<rect x="249.1" y="779.2" width="1.9" height="1.9" fill="#e00000" />
<rect x="252.2" y="779.2" width="1.9" height="1.9" fill="#e00000" />
<rect x="246" y="782" width="1.9" height="1.9" fill="#0000c0" />
<rect x="249.1" y="782" width="1.9" height="1.9" fill="#0000c0" />
<rect x="252.2" y="782" width="1.9" height="1.9" fill="#0000c0" />
<rect x="246" y="788" width="1.9" height="1.9" fill="#0000c0" />
<rect x="249.1" y="788" width="1.9" height="1.9" fill="#0000c0" />
<rect x="252.2" y="788" width="1.9" height="1.9" fill="#0000c0" />
<rect x="246" y="790.8" width="1.9" height="1.9" fill="#e00000" />
<rect x="249.1" y="790.8" width="1.9" height="1.9" fill="#e00000" />
<rect x="252.2" y="790.8" width="1.9" height="1.9" fill="#e00000" />
<rect x="264.2" y="779.2" width="13.8" height="1.6" fill="#000" />
<rect x="263" y="789.2" width="15" height="1.6" fill="#000" />
<rect x="263" y="792" width="15" height="1.8" fill="#000" />
<line x1="270.6" y1="780.8" x2="270.6" y2="786" stroke="#e00000" stroke-width="1.2" />
<path d="M268,785 H273.2 L270.6,789 Z" fill="#e00000" />
<ellipse cx="291.8" cy="782.7" rx="7.4" ry="3.6" fill="none" stroke="#1a1a00" stroke-width="2.3"/>
<ellipse cx="291.8" cy="782.7" rx="7.4" ry="3.6" fill="none" stroke="#ffff00" stroke-width="1.45"/>
<circle cx="289.4" cy="786.4" r="1.9" fill="none" stroke="#202000" stroke-width="2.2"/>
<circle cx="289.4" cy="786.4" r="1.9" fill="none" stroke="#ffff00" stroke-width="1"/>
<line x1="289.3" y1="788" x2="289.3" y2="792.8" stroke="#202000" stroke-width="2.2" />
<line x1="289.3" y1="788" x2="289.3" y2="792.4" stroke="#ffff00" stroke-width="1" />
<rect x="306" y="779.2" width="7.2" height="1.6" fill="#e00000" />
<rect x="313.2" y="779.2" width="6.8" height="1.6" fill="#000" />
<rect x="306" y="782.2" width="2.8" height="1.7" fill="#e00000" />
<rect x="317.4" y="782.2" width="2.6" height="1.7" fill="#000" />
<rect x="309.4" y="789.2" width="3.8" height="1.6" fill="#e00000" />
<rect x="313.2" y="789.2" width="4.4" height="1.6" fill="#000" />
<rect x="306" y="792" width="7.2" height="1.8" fill="#e00000" />
<rect x="313.2" y="792" width="6.8" height="1.8" fill="#000" />
<line x1="336" y1="782.6" x2="345.6" y2="782.6" stroke="#0000ff" stroke-width="1" />
<line x1="336" y1="781" x2="336" y2="784.2" stroke="#0000ff" stroke-width="1" />
<line x1="345.6" y1="781" x2="345.6" y2="784.2" stroke="#0000ff" stroke-width="1" />
<rect x="331.9" y="785" width="13.7" height="3" fill="#ff0000" />
<rect x="336.9" y="787.6" width="10.8" height="2.1" fill="#ff0000" />
<line x1="354.4" y1="780.5" x2="363.8" y2="780.5" stroke="#0000ff" stroke-width="1" />
<line x1="354.4" y1="779" x2="354.4" y2="782" stroke="#0000ff" stroke-width="1" />
<line x1="363.8" y1="779" x2="363.8" y2="782" stroke="#0000ff" stroke-width="1" />
<rect x="355.6" y="783" width="8.2" height="1.8" fill="#ff0000" />
<line x1="354.4" y1="782.6" x2="354.4" y2="792.4" stroke="#000" stroke-width="1" />
<line x1="354" y1="792.2" x2="369" y2="792.2" stroke="#000" stroke-width="1.2" />
<path d="M357.5,786 V792 M360,786.8 H357.5 M360.5,787.5 V792 M363,788.6 H360.5 M363.5,789.2 V792 M366,790.4 H363.5 M366.4,790.6 V792 M368.6,791.2 H366.4" fill="none" stroke="#0000e0" stroke-width="1" />
<rect x="374" y="779.4" width="15" height="1.5" fill="#000" />
<rect x="375.5" y="778.6" width="5" height="1" fill="#000" />
<rect x="374" y="790.8" width="15" height="1.9" fill="#000" />
<line x1="377.6" y1="781" x2="377.6" y2="786" stroke="#e00000" stroke-width="1.3" />
<path d="M375.2,785 H380 L377.6,789.6 Z" fill="#e00000" />
<rect x="375.2" y="783.8" width="4.8" height="1" fill="#e00000" />
<text x="382.2" y="789.6" font-size="9.6" fill="#0000e0" text-anchor="start" textLength="5.6" lengthAdjust="spacingAndGlyphs" >V</text>
<rect x="395" y="779.4" width="15" height="1.5" fill="#000" />
<rect x="396.5" y="778.6" width="5" height="1" fill="#000" />
<rect x="395" y="790.8" width="15" height="1.9" fill="#000" />
<line x1="398.6" y1="781" x2="398.6" y2="786" stroke="#e00000" stroke-width="1.3" />
<path d="M396.2,785 H401 L398.6,789.6 Z" fill="#e00000" />
<rect x="396.2" y="783.8" width="4.8" height="1" fill="#e00000" />
<text x="403.2" y="789.6" font-size="9.6" fill="#0000e0" text-anchor="start" textLength="4.4" lengthAdjust="spacingAndGlyphs" >1</text>
<path d="M427.6,780 H431.2 V783 L432.4,785.2 V791.8 H426.2 V785.2 L427.6,783 Z" fill="#5a78b4" stroke="#2a3c70" stroke-width="0.7" />
<path d="M435.4,780 H439 V783 L440.4,785.2 V791.8 H434 V785.2 L435.4,783 Z" fill="#7a96c8" stroke="#2a3c70" stroke-width="0.7" />
<rect x="432" y="785" width="2.4" height="3" fill="#3a5088" />
<rect x="427.2" y="786.6" width="4.2" height="4.2" fill="#b8c8e6" />
<rect x="435" y="786.6" width="4.2" height="4.2" fill="#c8d6ee" />
<line x1="436" y1="780.5" x2="450.5" y2="780.5" stroke="#ff0000" stroke-width="1.3" />
<path d="M443.9,783.8 L447.9,786.7 L443.9,789.6" fill="none" stroke="#000" stroke-width="0.9" />
<rect x="460" y="775.6" width="60" height="21.2" fill="#ffffff" />
<text x="463.6" y="788.9" font-size="11.4" fill="#000" text-anchor="start" textLength="22.6" lengthAdjust="spacingAndGlyphs" >6000</text>
<path d="M532.4,779.6 H537.8 L540.1999999999999,782.0 V788.6 H532.4 Z" fill="#dfeaff" stroke="#3a5cb4" stroke-width="0.8" />
<line x1="533.8" y1="782.6" x2="538.5999999999999" y2="782.6" stroke="#3a5cb4" stroke-width="0.6" />
<line x1="533.8" y1="784.5" x2="538.5999999999999" y2="784.5" stroke="#3a5cb4" stroke-width="0.6" />
<line x1="533.8" y1="786.4" x2="538.5999999999999" y2="786.4" stroke="#3a5cb4" stroke-width="0.6" />
<path d="M538.6,783 H544.6 L547.0,785.4 V792.4 H538.6 Z" fill="#dfeaff" stroke="#2a4aa8" stroke-width="0.8" />
<line x1="540.0" y1="786.0" x2="545.4" y2="786.0" stroke="#2a4aa8" stroke-width="0.6" />
<line x1="540.0" y1="787.9" x2="545.4" y2="787.9" stroke="#2a4aa8" stroke-width="0.6" />
<line x1="540.0" y1="789.8" x2="545.4" y2="789.8" stroke="#2a4aa8" stroke-width="0.6" />
<rect x="559.6" y="780.8" width="11" height="10.6" fill="#e8b838" stroke="#8a6410" stroke-width="0.9" rx="1"/>
<rect x="562.4" y="779.4" width="5.6" height="2.6" fill="#c8c8c8" stroke="#6a6a6a" stroke-width="0.6" rx="0.8"/>
<path d="M565.6,786 H572.2 L574.6,788.4 V792.4 H565.6 Z" fill="#eef2f8" stroke="#5a6884" stroke-width="0.8" />
<line x1="567.0" y1="789.0" x2="573.0" y2="789.0" stroke="#5a6884" stroke-width="0.6" />
<line x1="567.0" y1="790.9" x2="573.0" y2="790.9" stroke="#5a6884" stroke-width="0.6" />
<line x1="567.0" y1="792.8" x2="573.0" y2="792.8" stroke="#5a6884" stroke-width="0.6" />
<rect x="586.6" y="780.8" width="11" height="10.6" fill="#e8b838" stroke="#8a6410" stroke-width="0.9" rx="1"/>
<rect x="589.4" y="779.4" width="5.6" height="2.6" fill="#c8c8c8" stroke="#6a6a6a" stroke-width="0.6" rx="0.8"/>
<path d="M592.6,786 H599.2 L601.6,788.4 V792.4 H592.6 Z" fill="#eef2f8" stroke="#5a6884" stroke-width="0.8" />
<line x1="594.0" y1="789.0" x2="600.0" y2="789.0" stroke="#5a6884" stroke-width="0.6" />
<line x1="594.0" y1="790.9" x2="600.0" y2="790.9" stroke="#5a6884" stroke-width="0.6" />
<line x1="594.0" y1="792.8" x2="600.0" y2="792.8" stroke="#5a6884" stroke-width="0.6" />
<rect x="13.2" y="755.6" width="11.6" height="9" fill="#e8eefc" stroke="#5070b0" stroke-width="1" />
<line x1="15" y1="759" x2="19" y2="759" stroke="#6080c0" stroke-width="0.8" />
<line x1="15" y1="761.6" x2="22.6" y2="761.6" stroke="#8098cc" stroke-width="0.8" />
<line x1="15" y1="763" x2="22.6" y2="763" stroke="#8098cc" stroke-width="0.8" />
<rect x="13.8" y="756.2" width="10.4" height="1.6" fill="#b8c8ec" />
<path d="M17.6,756 L21.6,751.6 L27.4,752.2 L27.4,755.6 L22.6,757.2 L19.6,758.4 Z" fill="#d8b040" stroke="#806010" stroke-width="0.7" />
<path d="M27.2,751.2 L28.8,751 V756.4 L27.2,756 Z" fill="#20a040" />
<path d="M18.05,776 H23.6 L18.2,781.7 L23.6,782.3 L14.3,791.6 L13.2,790.3 L17,784.6 L12.3,784.3 Z" fill="#f4dc00" />
<path d="M17.6,776.2 L12.6,783.9" fill="none" stroke="#ffffff" stroke-width="1" />
<path d="M23.9,776.3 L18.6,781.9 M24,782.6 L14.6,791.9" fill="none" stroke="#000" stroke-width="1.1" />
<path d="M12.2,784.6 H17.4" fill="none" stroke="#000" stroke-width="1.1" />
<path d="M15.2,785.4 L14.2,789" fill="none" stroke="#8a8a8a" stroke-width="0.8" />
<path d="M24.6,783.4 L15.4,792.4" fill="none" stroke="#bdbdbd" stroke-width="0.9" />
<text x="23.2" y="792" font-size="10.6" fill="#0000ff" text-anchor="start" textLength="4.6" lengthAdjust="spacingAndGlyphs" font-weight="bold">1</text>
<path d="M18.05,803.2 H23.6 L18.2,808.9000000000001 L23.6,809.5 L14.3,818.8000000000001 L13.2,817.5 L17,811.8000000000001 L12.3,811.5 Z" fill="#f4dc00" />
<path d="M17.6,803.4000000000001 L12.6,811.1" fill="none" stroke="#ffffff" stroke-width="1" />
<path d="M23.9,803.5 L18.6,809.1 M24,809.8000000000001 L14.6,819.1" fill="none" stroke="#000" stroke-width="1.1" />
<path d="M12.2,811.8000000000001 H17.4" fill="none" stroke="#000" stroke-width="1.1" />
<path d="M15.2,812.6 L14.2,816.2" fill="none" stroke="#8a8a8a" stroke-width="0.8" />
<path d="M24.6,810.6 L15.4,819.6" fill="none" stroke="#bdbdbd" stroke-width="0.9" />
<text x="21.2" y="818.9" font-size="10" fill="#0000ff" text-anchor="start" textLength="6.4" lengthAdjust="spacingAndGlyphs" >R</text>
<path d="M18.05,830.4 H23.6 L18.2,836.1 L23.6,836.6999999999999 L14.3,846.0 L13.2,844.6999999999999 L17,839.0 L12.3,838.6999999999999 Z" fill="#f4dc00" />
<path d="M17.6,830.6 L12.6,838.3" fill="none" stroke="#ffffff" stroke-width="1" />
<path d="M23.9,830.6999999999999 L18.6,836.3 M24,837.0 L14.6,846.3" fill="none" stroke="#000" stroke-width="1.1" />
<path d="M12.2,839.0 H17.4" fill="none" stroke="#000" stroke-width="1.1" />
<path d="M15.2,839.8 L14.2,843.4" fill="none" stroke="#8a8a8a" stroke-width="0.8" />
<path d="M24.6,837.8 L15.4,846.8" fill="none" stroke="#bdbdbd" stroke-width="0.9" />
<text x="23.4" y="845.6" font-size="10" fill="#0000ff" text-anchor="start" textLength="6" lengthAdjust="spacingAndGlyphs" >V</text>
<path d="M13.9,861 L19,865.5 L13.9,870 Z" fill="#800080" />
<text x="21.8" y="869.6" font-size="12" fill="#800080" text-anchor="start" textLength="6.2" lengthAdjust="spacingAndGlyphs" font-weight="bold">F</text>
<path d="M14.4,886.4 H22 L25.2,889.6 V899.6 H14.4 Z" fill="#f4f6fa" stroke="#6a86b8" stroke-width="0.9" />
<circle cx="21.2" cy="892.6" r="3.4" fill="#dce8f8" stroke="#7a7a7a" stroke-width="1"/>
<line x1="23.6" y1="895.2" x2="27.8" y2="899.4" stroke="#d88020" stroke-width="2.2" />
<path d="M17.5,917.3 L24.7,923.9 M24.7,917.3 L17.5,923.9" fill="none" stroke="#000" stroke-width="1.8" />
<text x="49.5" y="815" font-size="11.4" fill="#000" text-anchor="start" textLength="55.7" lengthAdjust="spacingAndGlyphs" >Current Bar</text>
<text x="158.5" y="816" font-size="11.4" fill="#000" text-anchor="start" textLength="33.5" lengthAdjust="spacingAndGlyphs" >Length</text>
<text x="231.5" y="815" font-size="11.4" fill="#000" text-anchor="start" textLength="49" lengthAdjust="spacingAndGlyphs" >Increment</text>
<text x="311" y="815.8" font-size="11.4" fill="#000" text-anchor="start" textLength="21.5" lengthAdjust="spacingAndGlyphs" >N.A.</text>
<text x="49.5" y="835.8" font-size="11.4" fill="#000" text-anchor="start" textLength="36.6" lengthAdjust="spacingAndGlyphs" >Number</text>
<text x="49.5" y="861.6" font-size="11.4" fill="#000" text-anchor="start" textLength="42.5" lengthAdjust="spacingAndGlyphs" >Diameter</text>
<text x="49.5" y="885.3" font-size="11.4" fill="#000" text-anchor="start" textLength="104" lengthAdjust="spacingAndGlyphs" >Moment redistribution</text>
<text x="49.5" y="909" font-size="11.4" fill="#000" text-anchor="start" textLength="74" lengthAdjust="spacingAndGlyphs" >Deflection span</text>
<text x="214.5" y="861.6" font-size="11.4" fill="#000" text-anchor="start" textLength="85" lengthAdjust="spacingAndGlyphs" >Bar Tag Locations</text>
<text x="214.5" y="885.3" font-size="11.4" fill="#000" text-anchor="start" textLength="19.5" lengthAdjust="spacingAndGlyphs" >Left</text>
<text x="278.5" y="885.3" font-size="11.4" fill="#000" text-anchor="start" textLength="25" lengthAdjust="spacingAndGlyphs" >Right</text>
<text x="244.2" y="909" font-size="11.4" fill="#000" text-anchor="start" textLength="59" lengthAdjust="spacingAndGlyphs" >Basic L/d (K)</text>
<rect x="94.5" y="821.5" width="20" height="19.5" fill="#fff" stroke="#7a7a7a" stroke-width="1" />
<text x="97.6" y="834.85" font-size="11.4" fill="#000" text-anchor="start" >3</text>
<rect x="115.39999999999999" y="821" width="16.4" height="10.25" fill="#f7f7f7" />
<rect x="115.39999999999999" y="831.25" width="16.4" height="10.25" fill="#f3f3f3" />
<path d="M120.6,828.7 L123.6,825.9 L126.6,828.7" fill="none" stroke="#3f4f75" stroke-width="1.9" />
<path d="M120.6,836.1 L123.6,838.9 L126.6,836.1" fill="none" stroke="#3f4f75" stroke-width="1.9" />
<rect x="94.5" y="846.5" width="20" height="19.5" fill="#fff" stroke="#7a7a7a" stroke-width="1" />
<text x="97.4" y="859.85" font-size="11.4" fill="#000" text-anchor="start" textLength="11.1" lengthAdjust="spacingAndGlyphs" >16</text>
<rect x="115.39999999999999" y="846" width="16.4" height="10.25" fill="#f7f7f7" />
<rect x="115.39999999999999" y="856.25" width="16.4" height="10.25" fill="#f3f3f3" />
<path d="M120.6,853.7 L123.6,850.9 L126.6,853.7" fill="none" stroke="#3f4f75" stroke-width="1.9" />
<path d="M120.6,861.1 L123.6,863.9 L126.6,861.1" fill="none" stroke="#3f4f75" stroke-width="1.9" />
<rect x="157.8" y="821.5" width="34.599999999999994" height="19.5" fill="#fff" stroke="#7a7a7a" stroke-width="1" />
<text x="160.6" y="834.85" font-size="11.4" fill="#000" text-anchor="start" textLength="22.2" lengthAdjust="spacingAndGlyphs" >1200</text>
<rect x="193.3" y="821" width="16.4" height="10.25" fill="#f7f7f7" />
<rect x="193.3" y="831.25" width="16.4" height="10.25" fill="#f3f3f3" />
<path d="M198.5,828.7 L201.5,825.9 L204.5,828.7" fill="none" stroke="#3f4f75" stroke-width="1.9" />
<path d="M198.5,836.1 L201.5,838.9 L204.5,836.1" fill="none" stroke="#3f4f75" stroke-width="1.9" />
<rect x="157.8" y="846.5" width="34.599999999999994" height="19.5" fill="#fff" stroke="#7a7a7a" stroke-width="1" />
<text x="160.6" y="859.85" font-size="11.4" fill="#000" text-anchor="start" >0</text>
<rect x="193.3" y="846" width="16.4" height="10.25" fill="#f7f7f7" />
<rect x="193.3" y="856.25" width="16.4" height="10.25" fill="#f3f3f3" />
<path d="M198.5,853.7 L201.5,850.9 L204.5,853.7" fill="none" stroke="#3f4f75" stroke-width="1.9" />
<path d="M198.5,861.1 L201.5,863.9 L204.5,861.1" fill="none" stroke="#3f4f75" stroke-width="1.9" />
<rect x="157.8" y="871.5" width="34.599999999999994" height="19.200000000000045" fill="#fff" stroke="#7a7a7a" stroke-width="1" />
<text x="160.6" y="884.7" font-size="11.4" fill="#000" text-anchor="start" >0</text>
<rect x="193.3" y="871" width="16.4" height="10.100000000000023" fill="#f7f7f7" />
<rect x="193.3" y="881.1" width="16.4" height="10.100000000000023" fill="#f3f3f3" />
<path d="M198.5,878.7 L201.5,875.9 L204.5,878.7" fill="none" stroke="#3f4f75" stroke-width="1.9" />
<path d="M198.5,886.1 L201.5,888.9 L204.5,886.1" fill="none" stroke="#3f4f75" stroke-width="1.9" />
<rect x="157.8" y="896.8" width="34.599999999999994" height="19.40000000000009" fill="#fff" stroke="#7a7a7a" stroke-width="1" />
<text x="160.6" y="910.1" font-size="11.4" fill="#000" text-anchor="start" >0</text>
<rect x="193.3" y="896.3" width="16.4" height="10.200000000000045" fill="#f7f7f7" />
<rect x="193.3" y="906.5" width="16.4" height="10.200000000000045" fill="#f3f3f3" />
<path d="M198.5,904.0 L201.5,901.1999999999999 L204.5,904.0" fill="none" stroke="#3f4f75" stroke-width="1.9" />
<path d="M198.5,911.4 L201.5,914.1999999999999 L204.5,911.4" fill="none" stroke="#3f4f75" stroke-width="1.9" />
<rect x="232.5" y="821.5" width="34.60000000000002" height="19.5" fill="#fff" stroke="#7a7a7a" stroke-width="1" />
<text x="235.2" y="834.85" font-size="11.4" fill="#000" text-anchor="start" textLength="11.1" lengthAdjust="spacingAndGlyphs" >25</text>
<rect x="268.2" y="821" width="16.4" height="10.25" fill="#f7f7f7" />
<rect x="268.2" y="831.25" width="16.4" height="10.25" fill="#f3f3f3" />
<path d="M273.4,828.7 L276.4,825.9 L279.4,828.7" fill="none" stroke="#3f4f75" stroke-width="1.9" />
<path d="M273.4,836.1 L276.4,838.9 L279.4,836.1" fill="none" stroke="#3f4f75" stroke-width="1.9" />
<rect x="306.9" y="821.5" width="34.200000000000045" height="19.5" fill="#efefef" stroke="#c6c6c6" stroke-width="1" />
<text x="309.4" y="834.85" font-size="11.4" fill="#8a8a8a" text-anchor="start" >0</text>
<rect x="342.3" y="821" width="16.4" height="10.25" fill="#f7f7f7" />
<rect x="342.3" y="831.25" width="16.4" height="10.25" fill="#f3f3f3" />
<path d="M347.5,828.7 L350.5,825.9 L353.5,828.7" fill="none" stroke="#a8a8a8" stroke-width="1.9" />
<path d="M347.5,836.1 L350.5,838.9 L353.5,836.1" fill="none" stroke="#a8a8a8" stroke-width="1.9" />
<rect x="308.5" y="846.5" width="32.60000000000002" height="19.5" fill="#fff" stroke="#7a7a7a" stroke-width="1" />
<text x="311" y="859.85" font-size="11.4" fill="#000" text-anchor="start" >0</text>
<rect x="342.3" y="846" width="16.4" height="10.25" fill="#f7f7f7" />
<rect x="342.3" y="856.25" width="16.4" height="10.25" fill="#f3f3f3" />
<path d="M347.5,853.7 L350.5,850.9 L353.5,853.7" fill="none" stroke="#3f4f75" stroke-width="1.9" />
<path d="M347.5,861.1 L350.5,863.9 L353.5,861.1" fill="none" stroke="#3f4f75" stroke-width="1.9" />
<rect x="308.5" y="871.5" width="32.60000000000002" height="19.200000000000045" fill="#fff" stroke="#7a7a7a" stroke-width="1" />
<text x="311" y="884.7" font-size="11.4" fill="#000" text-anchor="start" >0</text>
<rect x="342.3" y="871" width="16.4" height="10.100000000000023" fill="#f7f7f7" />
<rect x="342.3" y="881.1" width="16.4" height="10.100000000000023" fill="#f3f3f3" />
<path d="M347.5,878.7 L350.5,875.9 L353.5,878.7" fill="none" stroke="#3f4f75" stroke-width="1.9" />
<path d="M347.5,886.1 L350.5,888.9 L353.5,886.1" fill="none" stroke="#3f4f75" stroke-width="1.9" />
<rect x="308.5" y="896.8" width="32.60000000000002" height="19.40000000000009" fill="#fff" stroke="#7a7a7a" stroke-width="1" />
<text x="311" y="910.1" font-size="11.4" fill="#000" text-anchor="start" >0</text>
<rect x="342.3" y="896.3" width="16.4" height="10.200000000000045" fill="#f7f7f7" />
<rect x="342.3" y="906.5" width="16.4" height="10.200000000000045" fill="#f3f3f3" />
<path d="M347.5,904.0 L350.5,901.1999999999999 L353.5,904.0" fill="none" stroke="#3f4f75" stroke-width="1.9" />
<path d="M347.5,911.4 L350.5,914.1999999999999 L353.5,911.4" fill="none" stroke="#3f4f75" stroke-width="1.9" />
<text x="375" y="834.4" font-size="11.4" fill="#000" text-anchor="start" textLength="64.2" lengthAdjust="spacingAndGlyphs" >Flange Width</text>
<text x="447.2" y="834.4" font-size="11.4" fill="#000" text-anchor="start" textLength="33" lengthAdjust="spacingAndGlyphs" >b (mm)</text>
<text x="375" y="858.8" font-size="11.4" fill="#000" text-anchor="start" textLength="104" lengthAdjust="spacingAndGlyphs" >Flange Depth hf (mm)</text>
<text x="375" y="883.5" font-size="11.4" fill="#000" text-anchor="start" textLength="53" lengthAdjust="spacingAndGlyphs" >Web Width</text>
<text x="443" y="883.5" font-size="11.4" fill="#000" text-anchor="start" textLength="41" lengthAdjust="spacingAndGlyphs" >bw (mm)</text>
<text x="375" y="908.3" font-size="11.4" fill="#000" text-anchor="start" textLength="66" lengthAdjust="spacingAndGlyphs" >Overall Depth</text>
<text x="447.2" y="908.3" font-size="11.4" fill="#000" text-anchor="start" textLength="33" lengthAdjust="spacingAndGlyphs" >h (mm)</text>
<rect x="488.5" y="820.9" width="48" height="19.399999999999977" fill="#fff" stroke="#0078d7" stroke-width="1" />
<text x="491.6" y="834.2" font-size="11.4" fill="#000" text-anchor="start" textLength="17.6" lengthAdjust="spacingAndGlyphs" >700</text>
<line x1="497.6" y1="823.6" x2="497.6" y2="837.6" stroke="#000" stroke-width="1" />
<line x1="496" y1="823.6" x2="499.2" y2="823.6" stroke="#000" stroke-width="0.8" />
<line x1="496" y1="837.6" x2="499.2" y2="837.6" stroke="#000" stroke-width="0.8" />
<rect x="488.5" y="846.5" width="48" height="19.299999999999955" fill="#fff" stroke="#7a7a7a" stroke-width="1" />
<text x="491.4" y="859.75" font-size="11.4" fill="#000" text-anchor="start" textLength="16.6" lengthAdjust="spacingAndGlyphs" >175</text>
<rect x="488.5" y="871.3" width="48" height="19.200000000000045" fill="#fff" stroke="#7a7a7a" stroke-width="1" />
<text x="491.4" y="884.5" font-size="11.4" fill="#000" text-anchor="start" textLength="16.6" lengthAdjust="spacingAndGlyphs" >300</text>
<rect x="488.5" y="896.5" width="48" height="19.399999999999977" fill="#fff" stroke="#7a7a7a" stroke-width="1" />
<text x="491.4" y="909.8000000000001" font-size="11.4" fill="#000" text-anchor="start" textLength="16.6" lengthAdjust="spacingAndGlyphs" >400</text>
<rect x="537.4" y="820.4" width="16.4" height="10.199999999999989" fill="#f7f7f7" />
<rect x="537.4" y="830.5999999999999" width="16.4" height="10.199999999999989" fill="#f3f3f3" />
<path d="M542.6,828.1 L545.6,825.3 L548.6,828.1" fill="none" stroke="#3f4f75" stroke-width="1.9" />
<path d="M542.6,835.5 L545.6,838.3 L548.6,835.5" fill="none" stroke="#3f4f75" stroke-width="1.9" />
<rect x="537.4" y="846" width="16.4" height="10.149999999999977" fill="#f7f7f7" />
<rect x="537.4" y="856.15" width="16.4" height="10.149999999999977" fill="#f3f3f3" />
<path d="M542.6,853.7 L545.6,850.9 L548.6,853.7" fill="none" stroke="#3f4f75" stroke-width="1.9" />
<path d="M542.6,861.1 L545.6,863.9 L548.6,861.1" fill="none" stroke="#3f4f75" stroke-width="1.9" />
<rect x="537.4" y="870.8" width="16.4" height="10.100000000000023" fill="#f7f7f7" />
<rect x="537.4" y="880.9" width="16.4" height="10.100000000000023" fill="#f3f3f3" />
<path d="M542.6,878.5 L545.6,875.6999999999999 L548.6,878.5" fill="none" stroke="#3f4f75" stroke-width="1.9" />
<path d="M542.6,885.9 L545.6,888.6999999999999 L548.6,885.9" fill="none" stroke="#3f4f75" stroke-width="1.9" />
<rect x="537.4" y="896" width="16.4" height="10.199999999999989" fill="#f7f7f7" />
<rect x="537.4" y="906.2" width="16.4" height="10.199999999999989" fill="#f3f3f3" />
<path d="M542.6,903.7 L545.6,900.9 L548.6,903.7" fill="none" stroke="#3f4f75" stroke-width="1.9" />
<path d="M542.6,911.1 L545.6,913.9 L548.6,911.1" fill="none" stroke="#3f4f75" stroke-width="1.9" />
<defs><linearGradient id="og" x1="0" y1="0" x2="0" y2="1"><stop offset="0" stop-color="#f7c078"/><stop offset="0.5" stop-color="#f8a848"/><stop offset="1" stop-color="#fbc070"/></linearGradient></defs>
<rect x="580" y="823.6" width="23" height="21.2" fill="url(#og)" />
<rect x="580" y="846" width="23" height="21" fill="#f6f6f6" />
<rect x="580" y="868.6" width="23" height="21" fill="#f6f6f6" />
<rect x="580" y="891" width="23" height="21" fill="#f6f6f6" />
<path d="M585.4,829.6 H597.6 V832.8 H593.4 V839.6 H589.8 V832.8 H585.4 Z" fill="#d83030" stroke="#8a2020" stroke-width="0.6" />
<rect x="587.6" y="851.6" width="7.8" height="9.6" fill="#e43c3c" stroke="#8a2020" stroke-width="0.6" />
<path d="M586.6,874.6 H596 V884.4 H592.8 V877.6 H586.6 Z" fill="#d83030" stroke="#8a2020" stroke-width="0.6" />
<path d="M587,897 H596.4 V900 H590.2 V906.8 H587 Z" fill="#d83030" stroke="#8a2020" stroke-width="0.6" />
<path d="M356.6,941 L358.4,937.2 H366.4 L367.2,941 Z" fill="#f8f8f8" stroke="#6a7a9a" stroke-width="0.7" />
<rect x="354.4" y="941" width="14.2" height="6.4" fill="#c8d0de" stroke="#5a6a8a" stroke-width="0.8" rx="1"/>
<rect x="356.4" y="945.2" width="10" height="4.4" fill="#f4f6fa" stroke="#6a7a9a" stroke-width="0.6" />
<rect x="365.2" y="942.4" width="1.8" height="1.4" fill="#20c020" />
<path d="M375.2,942.4 H381.8 L378.5,946 Z" fill="#202020" />
<rect x="0" y="0" width="1281" height="1" fill="#0f7ad8" />
<rect x="0" y="0" width="1" height="955" fill="#0f7ad8" />
<rect x="1279.8" y="0" width="1.2" height="955" fill="#0f7ad8" />
<rect x="0" y="953.7" width="1281" height="1.3" fill="#0f7ad8" />
</svg>
</body></html>
